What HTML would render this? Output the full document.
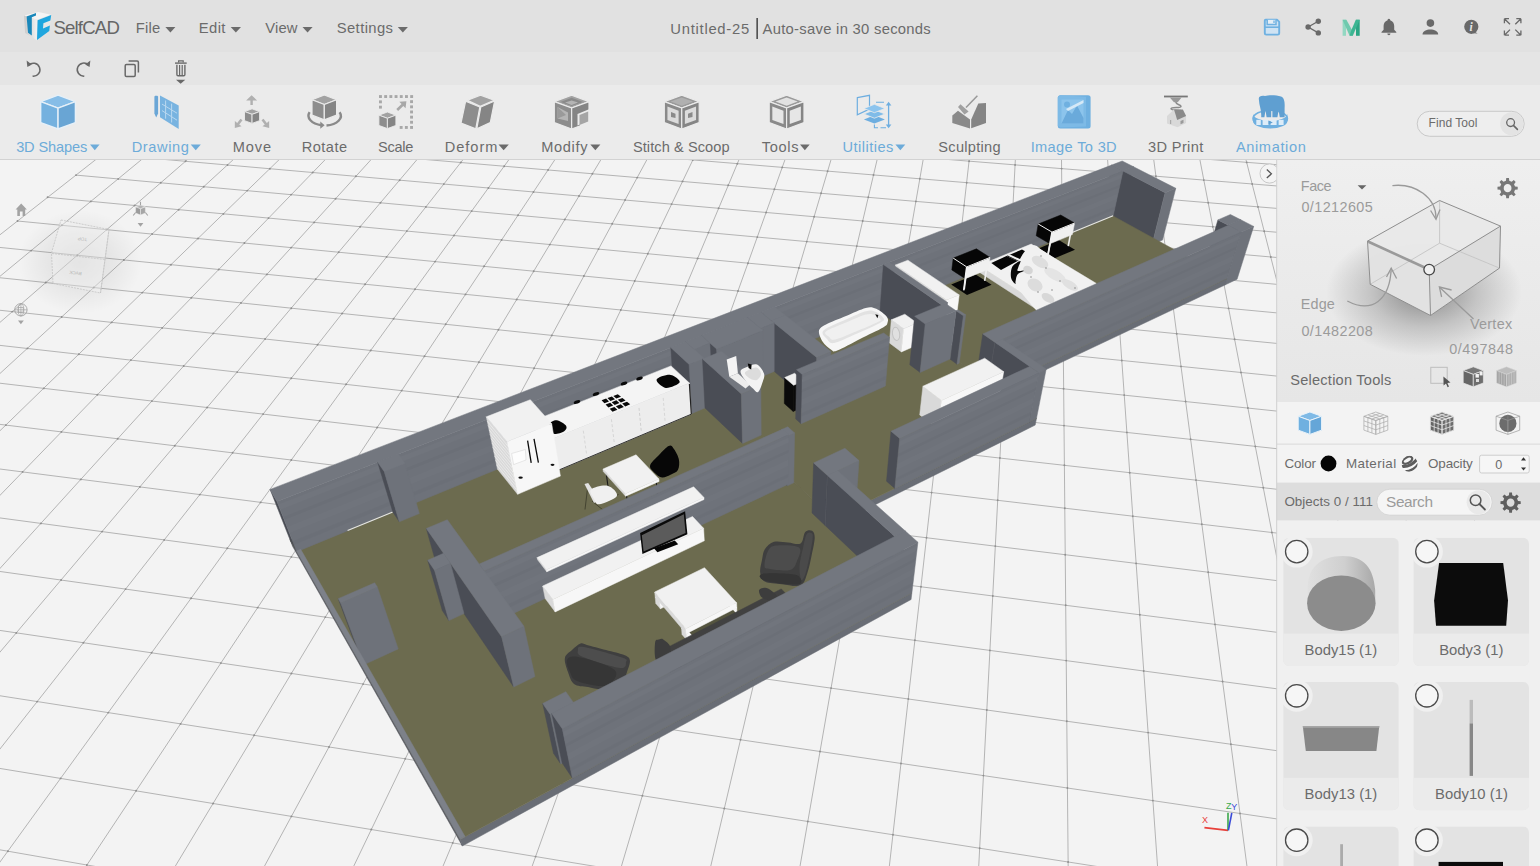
<!DOCTYPE html><html><head><meta charset="utf-8"><title>SelfCAD</title><style>html,body{margin:0;padding:0;background:#f1f1f1}
#app{position:relative;width:1540px;height:866px;overflow:hidden;font-family:"Liberation Sans",sans-serif;background:#f1f1f1}
#app>div{position:absolute;left:0;width:1540px}
#topbar{top:0;height:52px;background:#e1e1e1}
#row2{top:52px;height:33px;background:#e5e5e5}
#toolbar{top:85px;height:75px;background:#ebebeb}
#viewport{top:160px;height:706px;background:#f3f3f3}
#panel{top:160px;height:706px;pointer-events:none}
svg{position:absolute;left:0;top:0;display:block;font-family:"Liberation Sans",sans-serif}
svg text{white-space:pre}</style></head><body><div id="app"><div id="viewport"><svg width="1540" height="706" viewBox="0 160 1540 706"><path d="M366.8,-53.2L-4310.5,3618.9M397.4,-51.4L-4199.8,3739.3M428.3,-49.5L-4082.6,3866.9M459.3,-47.6L-3958.2,4002.2M490.6,-45.7L-3826.0,4146.0M522.2,-43.7L-3685.2,4299.2M553.9,-41.8L-3535.0,4462.6M585.9,-39.9L-3374.4,4637.4M618.2,-37.9L-3202.2,4824.7M650.6,-35.9L-3017.2,5026.0M683.3,-33.9L-2817.8,5242.9M716.3,-31.9L-2602.4,5477.2M749.5,-29.9L-2368.9,5731.2M783.0,-27.8L-2115.0,6007.5M816.7,-25.7L-1837.7,6309.1M850.6,-23.7L-1533.9,6639.7M884.8,-21.6L-1199.4,7003.6M919.3,-19.5L-829.3,7406.2M954.0,-17.3L-417.8,7853.9M989.0,-15.2L42.7,8354.9M1024.3,-13.0L561.4,8919.2M1059.9,-10.9L1150.1,9559.6M1095.7,-8.7L1823.9,10292.6M1131.8,-6.5L2602.8,11140.0M1168.2,-4.3L3513.4,12130.7M1204.8,-2.0L4592.3,13304.5M1241.8,0.2L5890.8,14717.1M1279.1,2.5L7483.6,16450.0M1316.6,4.8L9483.5,18625.7M1354.5,7.1L12069.5,21439.0M1392.6,9.5L15543.3,25218.2M1431.1,11.8L20457.2,30564.1M1469.8,14.2L27940.4,38705.2M1508.9,16.6L40721.6,52610.0M1548.3,19.0L67510.3,81753.9M1588.1,21.4L159248.4,181557.2M1628.1,23.9L-796913.4,-858665.6M1668.5,26.3L-125689.6,-128431.2M1709.2,28.8L-71657.7,-69649.1M1750.3,31.3L-51660.7,-47894.1M1791.7,33.9L-41242.9,-36560.4M366.8,-53.2L1791.7,33.9M352.9,-42.3L1809.1,48.7M338.4,-31.0L1827.4,64.3M323.3,-19.1L1846.6,80.6M307.6,-6.8L1866.8,97.8M291.2,6.1L1888.1,115.8M274.0,19.6L1910.4,134.9M256.0,33.7L1934.1,154.9M237.3,48.4L1959.0,176.2M217.5,63.9L1985.4,198.6M196.9,80.1L2013.4,222.4M175.1,97.2L2043.2,247.7M152.3,115.1L2074.8,274.6M128.2,134.1L2108.6,303.3M102.8,154.0L2144.6,334.0M76.0,175.1L2183.2,366.8M47.6,197.3L2224.6,402.0M17.5,221.0L2269.2,439.9M-14.4,246.0L2317.3,480.9M-48.4,272.7L2369.4,525.2M-84.6,301.1L2426.0,573.3M-123.2,331.5L2487.6,625.7M-164.6,363.9L2555.1,683.1M-209.0,398.8L2629.2,746.1M-256.7,436.2L2711.1,815.7M-308.2,476.7L2801.9,892.9M-363.9,520.4L2903.2,979.0M-424.3,567.8L3017.0,1075.8M-490.1,619.5L3145.7,1185.3M-562.0,676.0L3292.5,1310.1M-641.0,738.0L3461.5,1453.8M-728.1,806.3L3658.0,1620.9M-824.6,882.1L3889.6,1817.8M-932.2,966.6L4166.3,2053.1M-1052.8,1061.3L4502.8,2339.3M-1189.0,1168.2L4921.0,2694.9M-1344.1,1290.0L5454.6,3148.6M-1522.2,1429.8L6159.1,3747.7M-1728.8,1592.0L7132.1,4575.1M-1971.5,1782.6L8563.5,5792.2M-2260.6,2009.5L10876.7,7759.3M-2610.7,2284.4L15249.6,11477.7M-3043.5,2624.2L26640.6,21164.1M-3592.2,3054.9L130577.0,109545.8M-4310.5,3618.9L-41242.9,-36560.4" fill="none" stroke="#b4b4b4" stroke-width="1"/><path d="M76.0,175.1h0M47.6,197.3h0M17.5,221.0h0M144.0,157.6h0M118.2,178.9h0M90.8,201.4h0M61.9,225.3h0M31.2,250.6h0M-1.5,277.6h0M185.5,161.3h0M160.8,182.8h0M134.6,205.5h0M106.8,229.6h0M77.3,255.3h0M45.8,282.5h0M12.3,311.6h0M227.5,165.0h0M203.8,186.7h0M178.7,209.7h0M152.1,234.0h0M123.9,260.0h0M93.8,287.5h0M61.7,317.0h0M27.4,348.4h0M269.9,168.7h0M247.3,190.6h0M223.4,213.9h0M198.0,238.5h0M171.0,264.7h0M142.3,292.6h0M111.6,322.4h0M78.8,354.2h0M43.7,388.4h0M5.9,425.1h0M312.7,172.5h0M291.2,194.6h0M268.5,218.1h0M244.4,243.0h0M218.7,269.5h0M191.4,297.7h0M162.2,327.9h0M130.9,360.1h0M97.4,394.7h0M61.4,431.9h0M22.6,471.9h0M375.1,155.2h0M355.9,176.3h0M335.6,198.7h0M314.1,222.4h0M291.2,247.6h0M266.9,274.4h0M241.0,302.9h0M213.3,333.4h0M183.7,366.0h0M151.9,401.1h0M117.7,438.7h0M80.8,479.4h0M40.9,523.4h0M-2.4,571.1h0M417.7,158.8h0M399.7,180.2h0M380.5,202.8h0M360.2,226.7h0M338.7,252.2h0M315.7,279.3h0M291.3,308.2h0M265.1,339.0h0M237.2,372.1h0M207.1,407.5h0M174.8,445.7h0M139.9,486.9h0M102.1,531.6h0M61.1,580.0h0M16.3,632.9h0M460.8,162.5h0M443.8,184.1h0M425.9,206.9h0M406.8,231.1h0M386.6,256.9h0M365.1,284.2h0M342.1,313.5h0M317.6,344.7h0M291.3,378.2h0M263.1,414.1h0M232.6,452.8h0M199.8,494.6h0M164.2,539.9h0M125.6,589.1h0M83.4,642.8h0M37.2,701.6h0M504.2,166.2h0M488.4,188.0h0M471.7,211.1h0M454.0,235.5h0M435.1,261.6h0M415.0,289.3h0M393.6,318.8h0M370.7,350.5h0M346.1,384.3h0M319.7,420.8h0M291.3,460.0h0M260.6,502.4h0M227.3,548.3h0M191.1,598.3h0M151.6,652.8h0M108.3,712.6h0M60.6,778.4h0M7.9,851.2h0M548.1,169.9h0M533.5,192.0h0M518.0,215.3h0M501.6,240.0h0M484.1,266.3h0M465.5,294.4h0M445.7,324.3h0M424.5,356.3h0M401.7,390.6h0M377.2,427.5h0M350.8,467.3h0M322.3,510.3h0M291.4,556.9h0M257.7,607.6h0M220.9,663.1h0M180.6,723.9h0M136.1,790.8h0M86.9,865.0h0M592.4,173.7h0M579.0,196.0h0M564.8,219.5h0M549.8,244.6h0M533.7,271.2h0M516.7,299.5h0M498.4,329.8h0M478.9,362.2h0M458.0,397.0h0M435.5,434.3h0M411.2,474.7h0M384.9,518.3h0M356.4,565.6h0M325.3,617.1h0M291.4,673.5h0M254.1,735.3h0M213.1,803.5h0M648.7,156.3h0M637.2,177.6h0M625.1,200.0h0M612.2,223.8h0M598.5,249.1h0M583.9,276.0h0M568.4,304.7h0M551.8,335.4h0M534.1,368.2h0M515.0,403.4h0M494.5,441.3h0M472.4,482.1h0M448.4,526.4h0M422.4,574.4h0M394.1,626.8h0M363.1,684.1h0M329.0,747.0h0M291.4,816.4h0M692.8,160.0h0M682.5,181.4h0M671.6,204.1h0M660.0,228.2h0M647.8,253.8h0M634.7,281.0h0M620.8,310.0h0M605.9,341.0h0M589.9,374.2h0M572.8,409.9h0M554.4,448.3h0M534.4,489.7h0M512.9,534.6h0M489.5,583.4h0M463.9,636.6h0M436.0,694.8h0M405.2,758.8h0M371.3,829.5h0M737.3,163.7h0M728.2,185.3h0M718.6,208.3h0M708.4,232.6h0M697.6,258.5h0M686.0,286.0h0M673.7,315.3h0M660.6,346.7h0M646.5,380.4h0M631.4,416.5h0M615.0,455.4h0M597.4,497.5h0M578.3,543.0h0M557.6,592.5h0M534.9,646.6h0M510.1,705.8h0M482.9,770.9h0M452.7,842.9h0M782.2,167.4h0M774.4,189.3h0M766.1,212.5h0M757.3,237.1h0M748.0,263.2h0M738.0,291.0h0M727.4,320.7h0M716.0,352.5h0M703.8,386.6h0M690.7,423.2h0M676.6,462.6h0M661.3,505.3h0M644.8,551.5h0M626.8,601.8h0M607.1,656.7h0M585.6,716.9h0M561.9,783.2h0M535.6,856.6h0M827.6,171.2h0M821.1,193.3h0M814.1,216.7h0M806.8,241.6h0M798.9,268.0h0M790.6,296.1h0M781.6,326.2h0M772.1,358.4h0M761.9,392.9h0M750.9,430.0h0M739.0,470.0h0M726.2,513.2h0M712.2,560.1h0M697.1,611.2h0M680.5,667.0h0M662.4,728.2h0M642.4,795.7h0M873.5,175.0h0M868.3,197.3h0M862.7,221.0h0M856.8,246.1h0M850.5,272.8h0M843.8,301.3h0M836.6,331.7h0M828.9,364.3h0M820.7,399.2h0M811.8,436.8h0M802.3,477.4h0M792.0,521.3h0M780.8,568.9h0M768.5,620.8h0M755.2,677.5h0M740.5,739.8h0M724.3,808.5h0M923.6,157.5h0M919.8,178.8h0M915.9,201.4h0M911.7,225.3h0M907.3,250.7h0M902.6,277.7h0M897.6,306.5h0M892.2,337.3h0M886.5,370.3h0M880.3,405.7h0M873.7,443.8h0M866.5,484.9h0M858.7,529.4h0M850.3,577.8h0M841.1,630.5h0M831.1,688.1h0M820.0,751.5h0M807.8,821.5h0M969.1,161.2h0M966.7,182.7h0M964.1,205.5h0M961.4,229.7h0M958.5,255.4h0M955.4,282.7h0M952.1,311.8h0M948.5,343.0h0M944.8,376.4h0M940.7,412.3h0M936.3,450.9h0M931.6,492.6h0M926.5,537.7h0M921.0,586.8h0M914.9,640.3h0M908.3,699.0h0M901.0,763.5h0M893.0,834.7h0M1015.1,164.9h0M1014.0,186.6h0M1012.8,209.7h0M1011.5,234.1h0M1010.2,260.1h0M1008.7,287.7h0M1007.2,317.2h0M1005.6,348.8h0M1003.8,382.6h0M1001.9,418.9h0M999.9,458.0h0M997.7,500.3h0M995.3,546.1h0M992.8,596.0h0M989.9,650.4h0M986.8,710.0h0M983.4,775.6h0M979.7,848.2h0M1061.6,168.6h0M1061.8,190.6h0M1062.0,213.9h0M1062.2,238.6h0M1062.5,264.8h0M1062.7,292.8h0M1063.0,322.6h0M1063.3,354.6h0M1063.6,388.8h0M1064.0,425.6h0M1064.4,465.3h0M1064.8,508.2h0M1065.2,554.7h0M1065.7,605.3h0M1066.2,660.6h0M1066.8,721.2h0M1067.4,788.0h0M1068.1,862.0h0M1108.5,172.4h0M1110.1,194.6h0M1111.7,218.1h0M1113.5,243.1h0M1115.4,269.6h0M1117.4,297.9h0M1119.5,328.1h0M1121.8,360.5h0M1124.2,395.1h0M1126.9,432.4h0M1129.7,472.7h0M1132.8,516.2h0M1136.1,563.4h0M1139.8,614.8h0M1143.7,671.0h0M1148.1,732.6h0M1152.9,800.6h0M1153.1,155.1h0M1155.9,176.2h0M1158.9,198.7h0M1162.0,222.4h0M1165.3,247.7h0M1168.9,274.5h0M1172.6,303.1h0M1176.7,333.7h0M1181.0,366.4h0M1185.6,401.5h0M1190.6,439.3h0M1196.0,480.1h0M1201.8,524.3h0M1208.2,572.2h0M1215.0,624.4h0M1222.6,681.5h0M1230.9,744.3h0M1240.0,813.5h0M1199.7,158.7h0M1203.8,180.1h0M1208.2,202.7h0M1212.8,226.8h0M1217.8,252.3h0M1223.0,279.4h0M1228.6,308.4h0M1234.6,339.3h0M1241.0,372.5h0M1247.9,408.0h0M1255.3,446.4h0M1263.3,487.7h0M1271.9,532.5h0M1281.3,581.1h0M1291.6,634.2h0M1302.8,692.3h0M1315.1,756.1h0M1328.8,826.6h0M1246.7,162.4h0M1252.2,184.0h0M1258.0,206.9h0M1264.2,231.2h0M1270.8,257.0h0M1277.8,284.4h0M1285.2,313.7h0M1293.2,345.0h0M1301.7,378.6h0M1310.9,414.6h0M1320.8,453.5h0M1331.5,495.4h0M1343.0,540.8h0M1355.6,590.2h0M1369.3,644.1h0M1384.4,703.2h0M1400.9,768.1h0M1419.2,840.0h0M1294.2,166.1h0M1301.1,187.9h0M1308.4,211.1h0M1316.2,235.6h0M1324.4,261.7h0M1333.2,289.5h0M1342.5,319.1h0M1352.5,350.8h0M1363.3,384.8h0M1374.8,421.3h0M1387.3,460.7h0M1400.7,503.2h0M1415.3,549.3h0M1431.1,599.5h0M1448.4,654.2h0M1467.4,714.3h0M1488.3,780.4h0M1511.4,853.6h0M1342.2,169.9h0M1350.5,191.9h0M1359.3,215.3h0M1368.7,240.1h0M1378.6,266.5h0M1389.2,294.6h0M1400.5,324.5h0M1412.6,356.6h0M1425.6,391.1h0M1439.6,428.1h0M1454.6,468.0h0M1470.9,511.1h0M1488.6,557.9h0M1507.8,608.9h0M1528.8,664.5h0M1390.7,173.7h0M1400.4,195.9h0M1410.8,219.6h0M1421.8,244.6h0M1433.5,271.3h0M1445.9,299.7h0M1459.3,330.1h0M1473.5,362.6h0M1488.8,397.4h0M1505.2,434.9h0M1523.0,475.4h0M1542.2,519.1h0M1429.0,156.2h0M1439.6,177.5h0M1450.9,200.0h0M1462.8,223.9h0M1475.5,249.2h0M1489.0,276.2h0M1503.3,304.9h0M1518.7,335.7h0M1535.2,368.6h0M1477.1,159.9h0M1489.1,181.4h0M1501.9,204.1h0M1515.4,228.2h0M1529.8,253.9h0M1525.6,163.6h0M1539.1,185.3h0" fill="none" stroke="#8f8f8f" stroke-width="1.9" stroke-linecap="round"/><!-- Ne -->
<polygon points="1111.6,165.1 1123,171 1111.7,222.1 1100.8,216.1" fill="#4a4d55" stroke="#4a4d55" stroke-width="0.5" />
<polygon points="1123,171 1133.6,166.8 1122,217.9 1111.7,222.1" fill="#6e727a" stroke="#6e727a" stroke-width="0.5" />
<polygon points="1111.6,165.1 1122.2,161 1133.6,166.8 1123,171" fill="#73777f" stroke="#73777f" stroke-width="0.5" />
<!-- E1 -->
<polygon points="1123,171 1165.1,192.7 1152.1,244.6 1111.7,222.1" fill="#4a4d55" stroke="#4a4d55" stroke-width="0.5" />
<polygon points="1165.1,192.7 1175.8,188.3 1162.5,240.1 1152.1,244.6" fill="#6e727a" stroke="#6e727a" stroke-width="0.5" />
<polygon points="1123,171 1133.6,166.8 1175.8,188.3 1165.1,192.7" fill="#73777f" stroke="#73777f" stroke-width="0.5" />
<!-- S3stub -->
<polygon points="1217.9,219.9 1228.4,225.3 1212.6,278.2 1202.6,272.6" fill="#4a4d55" stroke="#4a4d55" stroke-width="0.5" />
<polygon points="1228.4,225.3 1240.8,219.8 1224.8,272.5 1212.6,278.2" fill="#6e727a" stroke="#6e727a" stroke-width="0.5" />
<polygon points="1217.9,219.9 1230.4,214.5 1240.8,219.8 1228.4,225.3" fill="#73777f" stroke="#73777f" stroke-width="0.5" />
<!-- S3e -->
<polygon points="1228.4,225.3 1241.2,232 1224.9,285 1212.6,278.2" fill="#4a4d55" stroke="#4a4d55" stroke-width="0.5" />
<polygon points="1241.2,232 1253.7,226.4 1237.1,279.2 1224.9,285" fill="#6e727a" stroke="#6e727a" stroke-width="0.5" />
<polygon points="1228.4,225.3 1240.8,219.8 1253.7,226.4 1241.2,232" fill="#73777f" stroke="#73777f" stroke-width="0.5" />
<!-- F3 -->
<polygon points="876,301.7 994.5,387.8 993.4,394.5 875.6,308.2" fill="#565960" stroke="#565960" stroke-width="0.5" />
<polygon points="994.5,387.8 1226.9,278.6 1224.9,285 993.4,394.5" fill="#696d75" stroke="#696d75" stroke-width="0.5" />
<polygon points="876,301.7 1102.1,209.9 1226.9,278.6 994.5,387.8" fill="#6c6b4f" stroke="#6c6b4f" stroke-width="0.5" />
<!-- F2 -->
<polygon points="684.3,379.5 833.1,518.9 832.8,525.8 684.7,386.2" fill="#565960" stroke="#565960" stroke-width="0.5" />
<polygon points="833.1,518.9 1036.5,418.3 1035.2,425.1 832.8,525.8" fill="#696d75" stroke="#696d75" stroke-width="0.5" />
<polygon points="684.3,379.5 876,301.7 1036.5,418.3 833.1,518.9" fill="#6c6b4f" stroke="#6c6b4f" stroke-width="0.5" />
<!-- F1 -->
<polygon points="290,539.7 460.1,839.5 462.4,846 292.7,546.5" fill="#565960" stroke="#565960" stroke-width="0.5" />
<polygon points="460.1,839.5 911.9,592.7 911.1,599.5 462.4,846" fill="#696d75" stroke="#696d75" stroke-width="0.5" />
<polygon points="290,539.7 684.3,379.5 911.9,592.7 460.1,839.5" fill="#6c6b4f" stroke="#6c6b4f" stroke-width="0.5" />
<!-- N -->
<polygon points="270.1,489.4 277,501.4 296.8,551.7 290,539.7" fill="#4a4d55" stroke="#4a4d55" stroke-width="0.5" />
<polygon points="277,501.4 1123,171 1113.1,215.9 296.8,551.7" fill="#6e727a" stroke="#6e727a" stroke-width="0.5" />
<polygon points="278.2,504.6 1122.4,173.7 1121.4,178.3 280.3,509.7" fill="#ffffff" fill-opacity="0.022"/>
<polygon points="283.1,516.9 1120,184.7 1119.4,187.4 284.3,520" fill="#000000" fill-opacity="0.022"/>
<polygon points="287.1,527.1 1118,193.8 1116.8,199.1 289.5,533.1" fill="#ffffff" fill-opacity="0.02"/>
<polygon points="292.6,541 1115.2,206.3 1114.4,209.8 294.2,544.9" fill="#000000" fill-opacity="0.02"/>
<polygon points="270.1,489.4 1111.6,165.1 1123,171 277,501.4" fill="#73777f" stroke="#73777f" stroke-width="0.5" />
<path d="M347.6,530.6L392.8,512.0" stroke="#e8e8e0" stroke-width="1.1"/><path d="M1056.2,239.1L1113.1,215.7" stroke="#e8e8e0" stroke-width="1.1"/>
<!-- ns2 -->
<polygon points="1035.0,249.9 1058.7,240.1 1075.0,249.7 1051.2,259.7" fill="#060606" /><path d="M1048.1,254.4L1050.3,242.5" stroke="#efefef" stroke-width="1.6"/><path d="M1068.2,246.1L1070.5,234.1" stroke="#efefef" stroke-width="1.6"/>
<polygon points="1038.2,224 1052,232.1 1049.9,243.8 1036.2,235.7" fill="#060606" stroke="#060606" stroke-width="0.5" />
<polygon points="1052,232.1 1074.6,223 1072.3,234.6 1049.9,243.8" fill="#f0f0f0" stroke="#f0f0f0" stroke-width="0.5" />
<polygon points="1038.2,224 1060.7,215 1074.6,223 1052,232.1" fill="#060606" stroke="#060606" stroke-width="0.5" />
<path d="M1038.2,224.0L1052.0,232.1L1074.6,223.0" fill="none" stroke="#f2f2f2" stroke-width="1"/><path d="M1052.0,232.1L1047.8,255.3" stroke="#f2f2f2" stroke-width="1.5"/>
<!-- bed -->
<polygon points="979,265.4 1043.1,306.7 1042,312.8 978.2,271.4" fill="#d9d9d9" stroke="#d9d9d9" stroke-width="0.5" />
<polygon points="1043.1,306.7 1096.1,283.3 1094.8,289.3 1042,312.8" fill="#f7f7f7" stroke="#f7f7f7" stroke-width="0.5" />
<polygon points="979,265.4 1031.2,244.1 1096.1,283.3 1043.1,306.7" fill="#f1f1f1" stroke="#f1f1f1" stroke-width="0.5" />
<polygon points="991.3,263.0 1006.5,256.1 1017.6,261.0 1001.0,270.0" fill="#060606" /><polygon points="1006.5,256.1 1022.0,249.5 1030.0,254.0 1017.6,261.0" fill="#060606" /><polygon points="1007.5,255.6 1010.0,254.6 1021.0,259.6 1018.3,260.7" fill="#f2f2f2" /><path d="M1019.7,259.6 C1021.4,256.3 1023.6,252.4 1026.0,250.0 C1028.4,247.6 1031.2,245.0 1034.2,245.2 C1037.2,245.4 1038.3,247.7 1043.9,251.3 C1049.5,254.9 1059.7,261.7 1068.0,267.0 C1076.3,272.3 1089.5,279.6 1093.8,283.1 C1098.1,286.6 1098.6,285.1 1094.0,288.0 C1089.4,290.9 1075.0,296.5 1066.0,300.5 C1057.0,304.5 1044.9,310.7 1039.8,312.2 C1034.7,313.7 1038.2,312.1 1035.6,309.4 C1033.0,306.7 1027.5,300.4 1024.0,296.0 C1020.5,291.6 1016.1,287.4 1014.8,283.1 C1013.5,278.8 1015.2,273.9 1016.0,270.0 C1016.8,266.1 1018.0,262.9 1019.7,259.6Z" fill="#f1f1f1" /><path d="M1012.4,266.5 C1014.0,263.7 1019.4,260.9 1020.4,261.0 C1021.4,261.1 1018.8,265.3 1018.4,267.0 C1018.0,268.7 1016.5,270.5 1018.0,271.0 C1019.5,271.5 1027.3,269.3 1027.3,269.8 C1027.3,270.3 1020.0,272.1 1018.0,274.0 C1016.0,275.9 1016.1,279.3 1015.6,281.0 C1015.1,282.7 1016.0,284.6 1015.2,284.0 C1014.4,283.4 1011.5,280.5 1011.0,277.6 C1010.5,274.7 1010.8,269.3 1012.4,266.5Z" fill="#080808" /><ellipse cx="1040.0" cy="262.0" rx="9.0" ry="5.0" fill="#dedede" transform="rotate(30 1040.0 262.0)"/><ellipse cx="1055.0" cy="275.0" rx="12.0" ry="5.0" fill="#e4e4e4" transform="rotate(30 1055.0 275.0)"/><ellipse cx="1035.0" cy="285.0" rx="8.0" ry="6.0" fill="#dcdcdc" transform="rotate(30 1035.0 285.0)"/><ellipse cx="1070.0" cy="285.0" rx="9.0" ry="4.0" fill="#e0e0e0" transform="rotate(30 1070.0 285.0)"/><ellipse cx="1048.0" cy="298.0" rx="7.0" ry="4.0" fill="#d8d8d8" transform="rotate(30 1048.0 298.0)"/><ellipse cx="1028.0" cy="270.0" rx="5.0" ry="4.0" fill="#d5d5d5" transform="rotate(30 1028.0 270.0)"/><circle cx="1046.0" cy="268.0" r="0.7" fill="#777"/><circle cx="1060.0" cy="281.0" r="0.7" fill="#777"/><circle cx="1038.0" cy="292.0" r="0.7" fill="#777"/><circle cx="1031.0" cy="277.0" r="0.7" fill="#777"/><circle cx="1052.0" cy="290.0" r="0.7" fill="#777"/><circle cx="1075.0" cy="288.0" r="0.7" fill="#777"/><circle cx="1041.0" cy="256.0" r="0.7" fill="#777"/>
<!-- ns1 -->
<polygon points="951.2,284.5 975.7,274.4 991.6,284.8 967.0,295.1" fill="#060606" /><path d="M964.2,289.5L965.8,277.3" stroke="#efefef" stroke-width="1.6"/><path d="M984.7,280.9L986.5,268.8" stroke="#efefef" stroke-width="1.6"/>
<polygon points="953.2,258.1 966.7,266.9 965.2,278.7 951.8,269.9" fill="#060606" stroke="#060606" stroke-width="0.5" />
<polygon points="966.7,266.9 990,257.4 988.3,269.2 965.2,278.7" fill="#f0f0f0" stroke="#f0f0f0" stroke-width="0.5" />
<polygon points="953.2,258.1 976.4,248.8 990,257.4 966.7,266.9" fill="#060606" stroke="#060606" stroke-width="0.5" />
<path d="M953.2,258.1L966.7,266.9L990.0,257.4" fill="none" stroke="#f2f2f2" stroke-width="1"/><path d="M966.7,266.9L963.7,290.4" stroke="#f2f2f2" stroke-width="1.5"/>
<!-- wardrobe -->
<polygon points="895.5,265 946.6,300.1 940.7,349.7 891.4,313.9" fill="#d9d9d9" stroke="#d9d9d9" stroke-width="0.5" />
<polygon points="946.6,300.1 959.2,294.9 952.9,344.4 940.7,349.7" fill="#f7f7f7" stroke="#f7f7f7" stroke-width="0.5" />
<polygon points="895.5,265 907.9,260.2 959.2,294.9 946.6,300.1" fill="#f1f1f1" stroke="#f1f1f1" stroke-width="0.5" />
<!-- BE -->
<polygon points="883.4,264.6 941.7,304.9 936.1,353.1 879.9,311.9" fill="#4a4d55" stroke="#4a4d55" stroke-width="0.5" />
<polygon points="941.7,304.9 947.6,302.5 941.8,350.6 936.1,353.1" fill="#6e727a" stroke="#6e727a" stroke-width="0.5" />
<polygon points="883.4,264.6 889.2,262.3 947.6,302.5 941.7,304.9" fill="#73777f" stroke="#73777f" stroke-width="0.5" />
<!-- tub -->
<path d="M819.0,330.6 C819.6,327.8 821.5,326.8 826.0,324.4 C830.5,322.0 839.4,318.8 846.0,316.0 C852.6,313.2 860.8,309.1 865.8,307.9 C870.8,306.7 872.7,307.4 876.2,308.8 C879.7,310.2 884.7,314.3 886.6,316.6 C888.5,318.9 888.2,320.7 887.6,322.5 C887.0,324.3 887.7,324.8 883.1,327.5 C878.5,330.2 867.6,335.1 860.0,339.0 C852.4,342.9 842.0,348.8 837.2,350.6 C832.4,352.4 833.7,351.2 831.2,349.7 C828.8,348.2 824.5,344.7 822.5,341.5 C820.5,338.3 818.4,333.5 819.0,330.6Z" fill="#f6f6f6" /><path d="M823.5,330.5 C826.7,327.2 838.9,322.7 846.0,319.5 C853.1,316.3 861.0,312.4 866.0,311.2 C871.0,309.9 873.1,310.8 876.0,312.0 C878.9,313.2 882.9,316.8 883.6,318.6 C884.3,320.4 884.6,320.4 880.0,323.0 C875.4,325.6 863.7,330.7 856.0,334.0 C848.3,337.3 838.8,342.2 834.0,343.0 C829.2,343.8 828.8,341.1 827.0,339.0 C825.2,336.9 820.3,333.8 823.5,330.5Z" fill="#e2e2e2" /><path d="M826.0,331.5 C828.8,329.1 839.3,325.3 846.0,322.5 C852.7,319.7 861.2,315.7 866.0,314.5 C870.8,313.3 872.6,314.3 875.0,315.2 C877.4,316.1 880.3,318.4 880.6,319.6 C880.9,320.8 881.1,320.6 877.0,322.6 C872.9,324.6 863.0,328.7 856.0,331.5 C849.0,334.3 839.5,338.7 835.0,339.6 C830.5,340.5 830.5,338.2 829.0,336.8 C827.5,335.4 823.2,333.9 826.0,331.5Z" fill="#f0f0f0" /><polygon points="875.2,314.3 878.4,315.0 877.4,318.2" fill="#111" />
<!-- washer -->
<polygon points="891.3,319.8 903.6,328.8 901.4,351.9 889.4,342.9" fill="#d9d9d9" stroke="#d9d9d9" stroke-width="0.5" />
<polygon points="903.6,328.8 917.1,323 914.8,346.1 901.4,351.9" fill="#f7f7f7" stroke="#f7f7f7" stroke-width="0.5" />
<polygon points="891.3,319.8 904.8,314.2 917.1,323 903.6,328.8" fill="#f1f1f1" stroke="#f1f1f1" stroke-width="0.5" />
<ellipse cx="896.1" cy="333.9" rx="3.6" ry="6.6" fill="#e0e0e0" stroke="#c4c4c4" stroke-width="1" transform="rotate(-8 896.1 333.9)"/>
<!-- door -->
<polygon points="956.1,310.8 963.4,315.8 957,364.2 950,359.1" fill="#4a4d55" stroke="#4a4d55" stroke-width="0.5" />
<polygon points="963.4,315.8 965.7,314.8 959.2,363.2 957,364.2" fill="#6e727a" stroke="#6e727a" stroke-width="0.5" />
<polygon points="956.1,310.8 958.4,309.9 965.7,314.8 963.4,315.8" fill="#73777f" stroke="#73777f" stroke-width="0.5" />
<!-- BS -->
<polygon points="914.6,316.3 925.2,324 920.1,372.4 909.8,364.7" fill="#4a4d55" stroke="#4a4d55" stroke-width="0.5" />
<polygon points="925.2,324 956.1,310.8 950,359.1 920.1,372.4" fill="#6e727a" stroke="#6e727a" stroke-width="0.5" />
<polygon points="914.6,316.3 945.4,303.4 956.1,310.8 925.2,324" fill="#73777f" stroke="#73777f" stroke-width="0.5" />
<!-- S3 -->
<polygon points="982.8,333.9 995.1,342.4 987.4,391.2 975.6,382.5" fill="#4a4d55" stroke="#4a4d55" stroke-width="0.5" />
<polygon points="995.1,342.4 1241.2,232 1226.9,278.6 987.4,391.2" fill="#6e727a" stroke="#6e727a" stroke-width="0.5" />
<polygon points="994.6,345.4 1240.3,234.9 1238.8,239.6 993.8,350.4" fill="#ffffff" fill-opacity="0.022"/>
<polygon points="992.7,357.4 1236.8,246.3 1235.9,249.1 992.2,360.3" fill="#000000" fill-opacity="0.022"/>
<polygon points="991.2,367.2 1233.9,255.6 1232.2,261.2 990.2,373" fill="#ffffff" fill-opacity="0.02"/>
<polygon points="989,380.7 1229.9,268.6 1228.8,272.2 988.4,384.5" fill="#000000" fill-opacity="0.02"/>
<polygon points="982.8,333.9 1228.4,225.3 1241.2,232 995.1,342.4" fill="#73777f" stroke="#73777f" stroke-width="0.5" />
<!-- Nthick2 -->
<polygon points="761.1,312.3 771.4,320.7 771.5,369.1 761.5,360.6" fill="#4a4d55" stroke="#4a4d55" stroke-width="0.5" />
<polygon points="771.4,320.7 785.3,315.2 784.9,363.5 771.5,369.1" fill="#6e727a" stroke="#6e727a" stroke-width="0.5" />
<polygon points="761.1,312.3 774.9,306.9 785.3,315.2 771.4,320.7" fill="#73777f" stroke="#73777f" stroke-width="0.5" />
<!-- J -->
<polygon points="995.1,342.4 1038.8,372.7 1029.3,421.9 987.4,391.2" fill="#4a4d55" stroke="#4a4d55" stroke-width="0.5" />
<polygon points="1038.8,372.7 1046.2,369.1 1036.5,418.3 1029.3,421.9" fill="#6e727a" stroke="#6e727a" stroke-width="0.5" />
<polygon points="995.1,342.4 1002.4,339.1 1046.2,369.1 1038.8,372.7" fill="#73777f" stroke="#73777f" stroke-width="0.5" />
<!-- BW -->
<polygon points="771.4,320.7 816.7,357.5 815.1,406.5 771.5,369.1" fill="#4a4d55" stroke="#4a4d55" stroke-width="0.5" />
<polygon points="816.7,357.5 830.9,351.5 828.8,400.4 815.1,406.5" fill="#6e727a" stroke="#6e727a" stroke-width="0.5" />
<polygon points="771.4,320.7 785.3,315.2 830.9,351.5 816.7,357.5" fill="#73777f" stroke="#73777f" stroke-width="0.5" />
<!-- Npier2 -->
<polygon points="747.6,317.6 760.6,328.4 761,376.9 748.4,366" fill="#4a4d55" stroke="#4a4d55" stroke-width="0.5" />
<polygon points="760.6,328.4 774.2,323 774.2,371.4 761,376.9" fill="#6e727a" stroke="#6e727a" stroke-width="0.5" />
<polygon points="747.6,317.6 761.1,312.3 774.2,323 760.6,328.4" fill="#73777f" stroke="#73777f" stroke-width="0.5" />
<!-- Nthick1 -->
<polygon points="701.5,335.6 716.6,348.9 718.6,397.8 703.9,384.3" fill="#4a4d55" stroke="#4a4d55" stroke-width="0.5" />
<polygon points="716.6,348.9 763.1,330.4 763.4,379 718.6,397.8" fill="#6e727a" stroke="#6e727a" stroke-width="0.5" />
<polygon points="701.5,335.6 747.6,317.6 763.1,330.4 716.6,348.9" fill="#73777f" stroke="#73777f" stroke-width="0.5" />
<!-- W2b -->
<polygon points="685.7,341.8 694,349.2 696.7,398.1 688.7,390.5" fill="#4a4d55" stroke="#4a4d55" stroke-width="0.5" />
<polygon points="694,349.2 709.8,343 712,391.7 696.7,398.1" fill="#6e727a" stroke="#6e727a" stroke-width="0.5" />
<polygon points="685.7,341.8 701.5,335.6 709.8,343 694,349.2" fill="#73777f" stroke="#73777f" stroke-width="0.5" />
<!-- cab -->
<polygon points="784.6,377.6 793.6,385.3 793.2,411.4 784.3,403.6" fill="#0a0a0a" stroke="#0a0a0a" stroke-width="0.5" />
<polygon points="793.6,385.3 803.7,381 803.2,407.1 793.2,411.4" fill="#0a0a0a" stroke="#0a0a0a" stroke-width="0.5" />
<polygon points="784.6,377.6 794.6,373.3 803.7,381 793.6,385.3" fill="#f0f0f0" stroke="#f0f0f0" stroke-width="0.5" />
<!-- FW -->
<polygon points="796.5,369.7 802.2,374.4 801.1,423.7 795.7,418.9" fill="#4a4d55" stroke="#4a4d55" stroke-width="0.5" />
<polygon points="802.2,374.4 889.5,337.3 885.4,386 801.1,423.7" fill="#6e727a" stroke="#6e727a" stroke-width="0.5" />
<polygon points="802.1,377.5 889.2,340.4 888.8,345.4 802,382.5" fill="#ffffff" fill-opacity="0.022"/>
<polygon points="801.9,389.6 888.2,352.3 888,355.3 801.8,392.6" fill="#000000" fill-opacity="0.022"/>
<polygon points="801.7,399.5 887.4,362.1 886.9,367.9 801.5,405.4" fill="#ffffff" fill-opacity="0.02"/>
<polygon points="801.4,413.1 886.3,375.6 886,379.4 801.3,417" fill="#000000" fill-opacity="0.02"/>
<polygon points="796.5,369.7 883.6,333 889.5,337.3 802.2,374.4" fill="#73777f" stroke="#73777f" stroke-width="0.5" />
<!-- chest -->
<polygon points="922.9,386.2 941.5,400.5 937.9,429.3 919.7,414.9" fill="#d9d9d9" stroke="#d9d9d9" stroke-width="0.5" />
<polygon points="941.5,400.5 1003.7,371.7 998.9,400.2 937.9,429.3" fill="#f7f7f7" stroke="#f7f7f7" stroke-width="0.5" />
<polygon points="922.9,386.2 984.7,358.2 1003.7,371.7 941.5,400.5" fill="#f1f1f1" stroke="#f1f1f1" stroke-width="0.5" />
<!-- W2 -->
<polygon points="670.8,347.6 689.1,364.4 692,413.4 674.3,396.4" fill="#4a4d55" stroke="#4a4d55" stroke-width="0.5" />
<polygon points="689.1,364.4 704.1,358.3 706.5,407.3 692,413.4" fill="#6e727a" stroke="#6e727a" stroke-width="0.5" />
<polygon points="670.8,347.6 685.7,341.8 704.1,358.3 689.1,364.4" fill="#73777f" stroke="#73777f" stroke-width="0.5" />
<!-- TW -->
<polygon points="702.5,359 741.3,393.9 742.5,443.4 705,408" fill="#4a4d55" stroke="#4a4d55" stroke-width="0.5" />
<polygon points="741.3,393.9 760.8,385.7 761.2,435.1 742.5,443.4" fill="#6e727a" stroke="#6e727a" stroke-width="0.5" />
<polygon points="702.5,359 721.6,351.3 760.8,385.7 741.3,393.9" fill="#73777f" stroke="#73777f" stroke-width="0.5" />
<polygon points="726.7,359.4 736.2,356.0 737.9,373.3 729.3,376.8" fill="#f4f4f4" /><polygon points="729.3,376.8 737.9,373.3 750.0,384.5 745.6,388.6" fill="#ededed" /><path d="M740.5,371.6 C740.7,369.0 745.2,367.8 748.0,366.6 C750.8,365.4 754.4,363.5 757.0,364.6 C759.6,365.7 762.9,370.6 763.9,373.3 C764.9,376.0 764.0,377.9 763.0,381.0 C762.0,384.1 759.9,390.8 758.2,392.0 C756.5,393.2 754.9,390.2 753.0,388.5 C751.1,386.8 748.7,384.8 746.6,382.0 C744.5,379.2 740.3,374.2 740.5,371.6Z" fill="#f3f3f3" /><path d="M745.0,372.6 C746.0,370.8 753.3,367.4 756.0,367.6 C758.7,367.8 760.8,371.5 761.0,373.6 C761.2,375.7 758.8,379.2 757.0,380.0 C755.2,380.8 752.0,379.8 750.0,378.6 C748.0,377.4 744.0,374.4 745.0,372.6Z" fill="#dcdcdc" /><polygon points="747.8,363.4 751.6,364.4 751.2,369.4 748.6,368.0" fill="#080808" />
<!-- S2 -->
<polygon points="891,431.3 899.7,438.4 894.9,488.4 886.5,481.2" fill="#4a4d55" stroke="#4a4d55" stroke-width="0.5" />
<polygon points="899.7,438.4 1038.8,372.7 1029.3,421.9 894.9,488.4" fill="#6e727a" stroke="#6e727a" stroke-width="0.5" />
<polygon points="899.4,441.5 1038.2,375.7 1037.2,380.8 898.9,446.7" fill="#ffffff" fill-opacity="0.022"/>
<polygon points="898.2,453.8 1035.9,387.8 1035.3,390.8 897.9,456.9" fill="#000000" fill-opacity="0.022"/>
<polygon points="897.2,463.9 1033.9,397.7 1032.8,403.6 896.7,469.9" fill="#ffffff" fill-opacity="0.02"/>
<polygon points="895.9,477.7 1031.3,411.4 1030.6,415.2 895.5,481.6" fill="#000000" fill-opacity="0.02"/>
<polygon points="891,431.3 1029.7,366.4 1038.8,372.7 899.7,438.4" fill="#73777f" stroke="#73777f" stroke-width="0.5" />
<!-- counter -->
<polygon points="534,420.4 550.8,439.6 556.1,471.2 539.6,451.9" fill="#d4d4d4" stroke="#d4d4d4" stroke-width="0.5" />
<polygon points="550.8,439.6 689.4,383 691.3,414.2 556.1,471.2" fill="#ededed" stroke="#ededed" stroke-width="0.5" />
<polygon points="534,420.4 671,365.9 689.4,383 550.8,439.6" fill="#f4f4f4" stroke="#f4f4f4" stroke-width="0.5" />
<path d="M549.4,423.9 C550.3,422.0 554.0,419.9 556.8,420.2 C559.6,420.5 564.9,423.9 566.1,425.8 C567.3,427.7 566.1,429.9 564.2,431.3 C562.4,432.7 557.1,434.1 555.0,434.1 C552.9,434.1 552.2,433.0 551.3,431.3 C550.4,429.6 548.5,425.8 549.4,423.9Z" fill="#060606" /><path d="M656.6,379.6 C657.4,377.4 666.6,374.4 670.5,374.9 C674.4,375.3 680.5,380.1 679.7,382.3 C678.9,384.5 669.6,388.3 665.8,387.9 C661.9,387.4 655.8,381.8 656.6,379.6Z" fill="#060606" /><polygon points="601.6,400.3 606.1,398.6 609.0,401.5 604.4,403.3" fill="#080808" /><polygon points="605.6,404.6 610.2,402.7 613.2,405.6 608.4,407.6" fill="#080808" /><polygon points="609.7,408.8 614.4,406.9 617.4,409.7 612.5,411.8" fill="#080808" /><polygon points="607.5,398.1 611.9,396.4 615.0,399.2 610.4,400.9" fill="#080808" /><polygon points="611.7,402.2 616.3,400.3 619.4,403.1 614.7,405.0" fill="#080808" /><polygon points="615.9,406.2 620.7,404.3 623.8,407.0 618.9,409.1" fill="#080808" /><polygon points="613.3,395.9 617.8,394.2 621.0,396.8 616.4,398.6" fill="#080808" /><polygon points="617.8,399.8 622.4,397.9 625.6,400.5 620.9,402.5" fill="#080808" /><polygon points="622.2,403.6 627.0,401.7 630.2,404.3 625.3,406.4" fill="#080808" /><ellipse cx="577.0" cy="402.0" rx="3.4" ry="1.7" fill="#0a0a0a" transform="rotate(-20 577.0 402.0)"/><ellipse cx="596.0" cy="394.0" rx="3.4" ry="1.7" fill="#0a0a0a" transform="rotate(-20 596.0 394.0)"/><ellipse cx="624.0" cy="383.5" rx="3.4" ry="1.7" fill="#0a0a0a" transform="rotate(-20 624.0 383.5)"/><ellipse cx="639.5" cy="378.5" rx="3.4" ry="1.7" fill="#0a0a0a" transform="rotate(-20 639.5 378.5)"/><path d="M551.4,441.6L556.7,471.2" stroke="#111" stroke-width="1.4"/><path d="M556.1,471.2L691.3,414.2" stroke="#222" stroke-width="0.9"/><path d="M583.3,430.7L586.8,455.7" stroke="#d0d0d0" stroke-width="0.8" stroke-dasharray="3 2"/><path d="M611.4,419.2L614.4,444.0" stroke="#cfcfcf" stroke-width="0.8" stroke-dasharray="3 2"/><path d="M639.0,407.9L641.4,432.7" stroke="#c8c8c8" stroke-width="0.8" stroke-dasharray="3 2"/><path d="M663.2,397.9L665.2,422.7" stroke="#d0d0d0" stroke-width="0.8" stroke-dasharray="3 2"/><path d="M689.4,384.0L691.3,414.2" stroke="#222" stroke-width="1.2"/>
<!-- dchairB -->
<path d="M650.1,465.5 C650.8,462.5 655.9,458.2 659.0,455.0 C662.1,451.8 666.2,447.3 668.6,446.1 C671.0,444.9 671.5,445.8 673.2,447.9 C674.9,450.0 678.0,455.3 678.8,459.0 C679.6,462.7 679.3,467.5 677.9,470.1 C676.5,472.7 673.1,473.5 670.5,474.7 C667.9,475.9 664.7,477.8 662.1,477.5 C659.5,477.2 656.8,474.9 654.8,472.9 C652.8,470.9 649.4,468.5 650.1,465.5Z" fill="#070707" />
<!-- W1end -->
<polygon points="781.2,429.8 787.9,435.9 787.3,485.8 780.8,479.7" fill="#4a4d55" stroke="#4a4d55" stroke-width="0.5" />
<polygon points="787.9,435.9 794.6,432.9 793.7,482.8 787.3,485.8" fill="#6e727a" stroke="#6e727a" stroke-width="0.5" />
<polygon points="781.2,429.8 787.8,426.8 794.6,432.9 787.9,435.9" fill="#73777f" stroke="#73777f" stroke-width="0.5" />
<!-- fridge -->
<polygon points="486.3,416.8 507,441.7 517.6,494.3 497.5,469.2" fill="#d9d9d9" stroke="#d9d9d9" stroke-width="0.5" />
<polygon points="507,441.7 551.7,423.7 560.4,476.1 517.6,494.3" fill="#f7f7f7" stroke="#f7f7f7" stroke-width="0.5" />
<polygon points="486.3,416.8 530.3,399.7 551.7,423.7 507,441.7" fill="#f1f1f1" stroke="#f1f1f1" stroke-width="0.5" />
<path d="M527.6,440.6L531.2,462.800 M534,438.8L538.400,462.6" stroke="#0a0a0a" stroke-width="1.3" fill="none"/><polygon points="511.6,453.5 525.4,449.5 526.0,460.0 513.6,464.6" fill="#fdfdfd" stroke="#d8d8d8" stroke-width="0.6"/><ellipse cx="520.6" cy="477.600" rx="2.2" ry="1.2" fill="#111"/><ellipse cx="552.5" cy="464.8" rx="2" ry="1.1" fill="#111"/><path d="M487.2,421.2L507.9,446.1" stroke="#efefef" stroke-width="0.7"/><path d="M488.2,425.5L508.8,450.5" stroke="#efefef" stroke-width="0.7"/><path d="M489.1,429.9L509.6,454.9" stroke="#efefef" stroke-width="0.7"/><path d="M490.0,434.3L510.5,459.2" stroke="#efefef" stroke-width="0.7"/><path d="M491.0,438.6L511.4,463.6" stroke="#efefef" stroke-width="0.7"/><path d="M491.9,443.0L512.3,468.0" stroke="#efefef" stroke-width="0.7"/><path d="M492.8,447.4L513.2,472.4" stroke="#efefef" stroke-width="0.7"/><path d="M493.8,451.7L514.1,476.8" stroke="#efefef" stroke-width="0.7"/><path d="M494.7,456.1L515.0,481.1" stroke="#efefef" stroke-width="0.7"/><path d="M495.6,460.5L515.8,485.5" stroke="#efefef" stroke-width="0.7"/><path d="M496.6,464.8L516.7,489.9" stroke="#efefef" stroke-width="0.7"/>
<!-- dtable -->
<path d="M608.0,486.7L606.0,471.3" stroke="#1a1a1a" stroke-width="1.1"/><path d="M628.1,509.2L626.3,493.8" stroke="#1a1a1a" stroke-width="1.1"/><path d="M657.6,496.0L656.2,480.6" stroke="#1a1a1a" stroke-width="1.1"/>
<polygon points="603,469 625.3,493.7 625.6,496.2 603.3,471.5" fill="#d9d9d9" stroke="#d9d9d9" stroke-width="0.5" />
<polygon points="625.3,493.7 658.8,478.9 659.1,481.4 625.6,496.2" fill="#f7f7f7" stroke="#f7f7f7" stroke-width="0.5" />
<polygon points="603,469 636.1,454.8 658.8,478.9 625.3,493.7" fill="#f1f1f1" stroke="#f1f1f1" stroke-width="0.5" />
<!-- dchairW -->
<path d="M588,484.500L585,509.500M592,501L606,512.500 M615,496L618.5,494.5" stroke="#3a3a2a" stroke-width="0.8" fill="none"/><polygon points="584.5,484.0 588.2,483.0 599.6,500.0 594.0,503.0" fill="#e2e2e2" /><path d="M591.0,489.5 C593.3,487.3 603.3,484.7 607.6,485.8 C611.9,486.9 618.3,492.9 616.9,496.0 C615.5,499.1 603.1,503.8 599.3,504.3 C595.5,504.8 595.4,501.5 594.0,499.0 C592.6,496.5 588.7,491.7 591.0,489.5Z" fill="#f0f0f0" />
<!-- Npier -->
<polygon points="377.6,462.1 384.2,471.6 399.3,521.8 392.9,512.2" fill="#4a4d55" stroke="#4a4d55" stroke-width="0.5" />
<polygon points="384.2,471.6 405,463.4 419.3,513.5 399.3,521.8" fill="#6e727a" stroke="#6e727a" stroke-width="0.5" />
<polygon points="377.6,462.1 398.3,454 405,463.4 384.2,471.6" fill="#73777f" stroke="#73777f" stroke-width="0.5" />
<!-- W1 -->
<polygon points="479.2,564.1 484.1,571 496.4,621.4 491.6,614.6" fill="#4a4d55" stroke="#4a4d55" stroke-width="0.5" />
<polygon points="484.1,571 788.8,434.4 788.1,484.3 496.4,621.4" fill="#6e727a" stroke="#6e727a" stroke-width="0.5" />
<polygon points="484.9,574.1 788.7,437.5 788.7,442.6 486.2,579.3" fill="#ffffff" fill-opacity="0.022"/>
<polygon points="487.9,586.6 788.6,449.8 788.5,452.8 488.7,589.6" fill="#000000" fill-opacity="0.022"/>
<polygon points="490.4,596.7 788.4,459.8 788.4,465.8 491.9,602.7" fill="#ffffff" fill-opacity="0.02"/>
<polygon points="493.8,610.7 788.3,473.7 788.2,477.5 494.7,614.6" fill="#000000" fill-opacity="0.02"/>
<polygon points="479.2,564.1 782.8,429.1 788.8,434.4 484.1,571" fill="#73777f" stroke="#73777f" stroke-width="0.5" />
<!-- LREpier -->
<polygon points="813.6,462.9 827.5,475.5 825.4,525.7 812,513" fill="#4a4d55" stroke="#4a4d55" stroke-width="0.5" />
<polygon points="827.5,475.5 859,460.6 855.6,510.7 825.4,525.7" fill="#6e727a" stroke="#6e727a" stroke-width="0.5" />
<polygon points="813.6,462.9 844.9,448.3 859,460.6 827.5,475.5" fill="#73777f" stroke="#73777f" stroke-width="0.5" />
<!-- LRE -->
<polygon points="827.5,475.5 894.9,536.4 889.8,586.8 825.4,525.7" fill="#4a4d55" stroke="#4a4d55" stroke-width="0.5" />
<polygon points="894.9,536.4 905.3,531 899.9,581.4 889.8,586.8" fill="#6e727a" stroke="#6e727a" stroke-width="0.5" />
<polygon points="827.5,475.5 837.7,470.6 905.3,531 894.9,536.4" fill="#73777f" stroke="#73777f" stroke-width="0.5" />
<!-- armNE -->
<path d="M760.2,572.4 C759.7,568.8 761.2,563.9 762.0,560.0 C762.8,556.1 762.8,552.3 764.8,549.3 C766.8,546.3 770.1,542.9 774.0,541.8 C777.9,540.7 783.6,542.2 788.0,542.5 C792.4,542.8 797.7,545.2 800.6,543.5 C803.5,541.8 803.3,534.1 805.2,532.0 C807.1,529.9 810.5,529.8 812.1,530.8 C813.7,531.8 814.8,533.8 814.7,538.0 C814.6,542.2 812.7,550.3 811.5,556.0 C810.3,561.7 809.3,567.5 807.5,572.4 C805.7,577.3 804.9,583.3 800.6,585.3 C796.4,587.3 788.0,584.8 782.0,584.2 C776.0,583.6 768.4,583.6 764.8,581.6 C761.2,579.6 760.7,576.0 760.2,572.4Z" fill="#3f3f3f" /><path d="M764.5,566.0 C764.2,563.0 766.1,554.4 768.0,551.0 C769.9,547.6 770.8,546.1 776.0,545.5 C781.2,544.9 795.5,544.9 799.0,547.5 C802.5,550.1 798.5,557.2 797.0,561.0 C795.5,564.8 794.5,568.7 790.0,570.0 C785.5,571.3 774.2,569.7 770.0,569.0 C765.8,568.3 764.8,569.0 764.5,566.0Z" fill="#4c4c4c" /><path d="M803.0,548.0 C804.2,542.8 805.1,537.0 806.5,534.5 C807.9,532.0 810.5,532.1 811.5,533.0 C812.5,533.9 813.3,533.8 812.5,540.0 C811.7,546.2 808.3,563.3 806.5,570.0 C804.7,576.7 802.7,580.7 801.5,580.0 C800.3,579.3 799.2,571.3 799.5,566.0 C799.8,560.7 801.8,553.2 803.0,548.0Z" fill="#4a4a4a" /><path d="M762.0,574.0 C766.1,572.8 783.8,573.5 790.0,574.0 C796.2,574.5 798.2,575.2 799.5,577.0 C800.8,578.8 803.7,583.8 798.0,584.5 C792.3,585.2 771.5,582.8 765.5,581.0 C759.5,579.2 757.9,575.2 762.0,574.0Z" fill="#353535" />
<!-- bench -->
<polygon points="542.7,586 552.9,599.4 555.2,611.9 545.2,598.5" fill="#d9d9d9" stroke="#d9d9d9" stroke-width="0.5" />
<polygon points="552.9,599.4 703.6,528.3 704.3,540.8 555.2,611.9" fill="#f7f7f7" stroke="#f7f7f7" stroke-width="0.5" />
<polygon points="542.7,586 692.5,516.5 703.6,528.3 552.9,599.4" fill="#f1f1f1" stroke="#f1f1f1" stroke-width="0.5" />
<!-- tv -->
<polygon points="640.1,533.1 685.1,511.2 687.4,534.3 642.4,553.9" fill="#0a0a0a" /><polygon points="641.8,535.2 683.8,514.2 685.6,533.0 643.6,551.4" fill="#5b5b5b" /><polygon points="653.9,548.3 674.7,540.5 678.2,544.2 657.4,552.3" fill="#060606" />
<!-- ushelf -->
<polygon points="537.1,557.6 546.4,569.7 546.8,571.8 537.6,559.8" fill="#d9d9d9" stroke="#d9d9d9" stroke-width="0.5" />
<polygon points="546.4,569.7 703.9,497.4 704,499.5 546.8,571.8" fill="#f7f7f7" stroke="#f7f7f7" stroke-width="0.5" />
<polygon points="537.1,557.6 693.6,486.8 703.9,497.4 546.4,569.7" fill="#f1f1f1" stroke="#f1f1f1" stroke-width="0.5" />
<!-- cl2 -->
<polygon points="697.5,576.3 702.2,581.4 702.5,587.9 697.9,582.7" fill="#d9d9d9" stroke="#d9d9d9" stroke-width="0.5" />
<polygon points="702.2,581.4 709.5,577.8 709.8,584.3 702.5,587.9" fill="#f7f7f7" stroke="#f7f7f7" stroke-width="0.5" />
<polygon points="697.5,576.3 704.8,572.7 709.5,577.8 702.2,581.4" fill="#f1f1f1" stroke="#f1f1f1" stroke-width="0.5" />
<!-- cl1 -->
<polygon points="655.2,597 659.7,602.4 660.4,608.8 655.8,603.5" fill="#d9d9d9" stroke="#d9d9d9" stroke-width="0.5" />
<polygon points="659.7,602.4 667.3,598.6 667.9,605.1 660.4,608.8" fill="#f7f7f7" stroke="#f7f7f7" stroke-width="0.5" />
<polygon points="655.2,597 662.8,593.3 667.3,598.6 659.7,602.4" fill="#f1f1f1" stroke="#f1f1f1" stroke-width="0.5" />
<!-- cl4 -->
<polygon points="724.4,606.2 729.3,611.7 729.6,618.1 724.7,612.7" fill="#d9d9d9" stroke="#d9d9d9" stroke-width="0.5" />
<polygon points="729.3,611.7 736.8,607.8 737,614.3 729.6,618.1" fill="#f7f7f7" stroke="#f7f7f7" stroke-width="0.5" />
<polygon points="724.4,606.2 731.8,602.4 736.8,607.8 729.3,611.7" fill="#f1f1f1" stroke="#f1f1f1" stroke-width="0.5" />
<!-- cl3 -->
<polygon points="681.5,628 686.3,633.7 686.8,640.1 682,634.5" fill="#d9d9d9" stroke="#d9d9d9" stroke-width="0.5" />
<polygon points="686.3,633.7 694,629.7 694.4,636.2 686.8,640.1" fill="#f7f7f7" stroke="#f7f7f7" stroke-width="0.5" />
<polygon points="681.5,628 689.2,624.1 694,629.7 686.3,633.7" fill="#f1f1f1" stroke="#f1f1f1" stroke-width="0.5" />
<!-- coffee -->
<polygon points="673.6,613.8 716.9,592.1 737.0,614.3 693.2,636.8" fill="#55553f" />
<polygon points="654.7,592 685.9,628.7 686.3,633.7 655.2,597" fill="#d9d9d9" stroke="#d9d9d9" stroke-width="0.5" />
<polygon points="685.9,628.7 736.6,602.8 736.8,607.8 686.3,633.7" fill="#f7f7f7" stroke="#f7f7f7" stroke-width="0.5" />
<polygon points="654.7,592 704.5,567.7 736.6,602.8 685.9,628.7" fill="#f1f1f1" stroke="#f1f1f1" stroke-width="0.5" />
<!-- sofa -->
<polygon points="667.5,647.4 683.9,667.3 686.2,696.4 670.2,676.6" fill="#2c2c2c" stroke="#2c2c2c" stroke-width="0.5" />
<polygon points="683.9,667.3 798.7,606.9 798,636.2 686.2,696.4" fill="#353535" stroke="#353535" stroke-width="0.5" />
<polygon points="667.5,647.4 781.3,588.9 798.7,606.9 683.9,667.3" fill="#414141" stroke="#414141" stroke-width="0.5" />
<path d="M655.1,642.5 C655.6,639.0 657.6,640.1 659.0,639.6 C660.4,639.1 661.4,638.3 663.2,639.4 C665.1,640.5 669.2,643.4 670.1,646.3 C671.0,649.1 670.8,654.1 668.5,656.5 C666.2,658.9 658.5,662.9 656.3,660.6 C654.1,658.3 654.6,646.0 655.1,642.5Z" fill="#3d3d3d" /><path d="M759.0,590.5 C759.2,588.9 761.5,588.3 763.0,588.0 C764.5,587.7 765.8,587.2 768.0,588.5 C770.2,589.8 775.7,593.5 776.4,595.5 C777.1,597.5 774.4,600.2 772.0,600.5 C769.6,600.8 764.2,599.2 762.0,597.5 C759.8,595.8 758.8,592.1 759.0,590.5Z" fill="#3d3d3d" />
<!-- armSW -->
<path d="M564.9,657.9 C565.6,654.2 569.4,652.4 572.0,650.0 C574.6,647.6 578.0,644.5 580.5,643.6 C583.0,642.8 582.8,643.8 587.0,644.9 C591.2,646.0 599.7,648.3 606.0,650.0 C612.3,651.7 620.7,653.5 624.7,655.3 C628.7,657.0 629.5,657.7 629.9,660.5 C630.3,663.3 628.3,668.5 627.0,672.0 C625.7,675.5 626.0,678.4 622.1,681.3 C618.2,684.1 609.6,688.1 603.9,689.1 C598.2,690.1 593.0,687.9 588.0,687.0 C583.0,686.1 577.3,686.4 574.0,683.9 C570.7,681.4 569.5,676.3 568.0,672.0 C566.5,667.7 564.2,661.6 564.9,657.9Z" fill="#3f3f3f" /><path d="M578.0,650.0 C578.2,648.3 576.7,645.8 584.0,647.0 C591.3,648.2 615.0,655.0 622.0,657.5 C629.0,660.0 626.3,660.2 626.0,662.0 C625.7,663.8 627.2,668.8 620.0,668.0 C612.8,667.2 590.0,660.0 583.0,657.0 C576.0,654.0 577.8,651.7 578.0,650.0Z" fill="#4d4d4d" /><path d="M567.0,660.0 C568.3,657.5 570.8,655.8 578.0,657.0 C585.2,658.2 603.7,663.8 610.0,667.0 C616.3,670.2 617.0,672.8 616.0,676.0 C615.0,679.2 610.5,685.2 604.0,686.0 C597.5,686.8 582.7,683.3 577.0,681.0 C571.3,678.7 571.7,675.5 570.0,672.0 C568.3,668.5 565.7,662.5 567.0,660.0Z" fill="#363636" />
<!-- X -->
<polygon points="426.3,528.5 501.6,636.8 513.7,687 440.5,578.9" fill="#4a4d55" stroke="#4a4d55" stroke-width="0.5" />
<polygon points="501.6,636.8 523.9,626.2 534.9,676.5 513.7,687" fill="#6e727a" stroke="#6e727a" stroke-width="0.5" />
<polygon points="426.3,528.5 447.3,519.7 523.9,626.2 501.6,636.8" fill="#73777f" stroke="#73777f" stroke-width="0.5" />
<!-- Xstub -->
<polygon points="427.7,560.2 434.5,570.2 448.9,620.6 442.3,610.6" fill="#4a4d55" stroke="#4a4d55" stroke-width="0.5" />
<polygon points="434.5,570.2 450.4,563.2 464,613.6 448.9,620.6" fill="#6e727a" stroke="#6e727a" stroke-width="0.5" />
<polygon points="427.7,560.2 443.6,553.3 450.4,563.2 434.5,570.2" fill="#73777f" stroke="#73777f" stroke-width="0.5" />
<!-- Wstub -->
<polygon points="338.2,598.7 340.7,603.1 363.8,664.8 361.3,660.4" fill="#4a4d55" stroke="#4a4d55" stroke-width="0.5" />
<polygon points="340.7,603.1 377.3,587.1 398.2,648.9 363.8,664.8" fill="#6e727a" stroke="#6e727a" stroke-width="0.5" />
<polygon points="338.2,598.7 374.7,582.8 377.3,587.1 340.7,603.1" fill="#73777f" stroke="#73777f" stroke-width="0.5" />
<!-- S1pier -->
<polygon points="542.7,703.5 550.2,714.4 560.7,763.9 553.5,753.2" fill="#4a4d55" stroke="#4a4d55" stroke-width="0.5" />
<polygon points="550.2,714.4 573.4,702.4 582.8,752.1 560.7,763.9" fill="#6e727a" stroke="#6e727a" stroke-width="0.5" />
<polygon points="542.7,703.5 565.8,691.7 573.4,702.4 550.2,714.4" fill="#73777f" stroke="#73777f" stroke-width="0.5" />
<!-- S1 -->
<polygon points="551.8,713.6 562.3,728.8 572.4,778.2 562.2,763.1" fill="#4a4d55" stroke="#4a4d55" stroke-width="0.5" />
<polygon points="562.3,728.8 917.9,542.2 911.9,592.7 572.4,778.2" fill="#6e727a" stroke="#6e727a" stroke-width="0.5" />
<polygon points="562.9,731.9 917.5,545.3 916.9,550.6 564,737" fill="#ffffff" fill-opacity="0.022"/>
<polygon points="565.4,744.1 916.1,557.8 915.7,560.9 566,747.1" fill="#000000" fill-opacity="0.022"/>
<polygon points="567.4,754.1 914.8,568 914.1,574 568.7,760" fill="#ffffff" fill-opacity="0.02"/>
<polygon points="570.2,767.7 913.2,581.9 912.7,585.9 571,771.5" fill="#000000" fill-opacity="0.02"/>
<polygon points="551.8,713.6 905.3,531 917.9,542.2 562.3,728.8" fill="#73777f" stroke="#73777f" stroke-width="0.5" />
<!-- Wcurb -->
<polygon points="296.5,551 459.9,838.8 460.1,839.5 296.8,551.7" fill="#565960" stroke="#565960" stroke-width="0.5" />
<polygon points="459.9,838.8 464.8,836.1 465,836.8 460.1,839.5" fill="#7d8189" stroke="#7d8189" stroke-width="0.5" />
<polygon points="296.5,551 300.7,549.3 464.8,836.1 459.9,838.8" fill="#7d8189" stroke="#7d8189" stroke-width="0.5" /><defs><radialGradient id="shN"><stop offset="0" stop-color="#000" stop-opacity="0.10"/><stop offset="0.55" stop-color="#000" stop-opacity="0.05"/><stop offset="1" stop-color="#000" stop-opacity="0"/></radialGradient></defs><ellipse cx="80" cy="262" rx="62" ry="52" fill="url(#shN)"/><polygon points="61.00,220.00 109.00,229.50 100.50,293.00 53.00,283.50 51.50,253.00" fill="#f3f3f3" fill-opacity="0.4" stroke="#c4c4c4" stroke-width="0.8" stroke-dasharray="2 1"/><path d="M52,253.5L105,259.500 M109,229.5L105,259.5L100.5,293" fill="none" stroke="#c4c4c4" stroke-width="0.8" stroke-dasharray="2 1"/><text x="82.5" y="240.500" font-size="4.6" fill="#b5b5b5" text-anchor="middle" transform="rotate(186 82.5 239)">TOP</text><text x="75.5" y="274.5" font-size="4.6" fill="#b5b5b5" text-anchor="middle" transform="matrix(-1 0 0 1 151 0) rotate(-6 75.5 273)">BACK</text><polygon points="15.60,209.50 21.20,203.50 26.90,209.50 25.20,209.50 25.20,216.00 22.60,216.00 22.60,211.60 19.90,211.60 19.90,216.00 17.30,216.00 17.30,209.50" fill="#a3a3a3" /><polygon points="140.50,205.00 145.40,206.90 140.50,208.80 135.60,206.90" fill="#b4b4b4" stroke="#eee" stroke-width="0.50" stroke-linejoin="round"/><polygon points="135.60,206.90 140.50,208.80 140.50,215.00 135.60,213.10" fill="#9c9c9c" stroke="#eee" stroke-width="0.50" stroke-linejoin="round"/><polygon points="140.50,208.80 145.40,206.90 145.40,213.10 140.50,215.00" fill="#a6a6a6" stroke="#eee" stroke-width="0.50" stroke-linejoin="round"/><path d="M140.5,205V201.800 M135.600,212.5L133.200,215.5 M145.4,212.5L147.800,215.5" stroke="#a3a3a3" stroke-width="1.1"/><polygon points="137.60,223.00 143.40,223.00 140.50,226.80" fill="#a3a3a3" /><circle cx="20.9" cy="309.8" r="6.2" fill="none" stroke="#a3a3a3" stroke-width="0.9"/><ellipse cx="20.9" cy="309.8" rx="3" ry="6.2" fill="none" stroke="#a3a3a3" stroke-width="0.7"/><path d="M14.7,309.8H27.1 M20.9,303.600V316" stroke="#a3a3a3" stroke-width="0.7"/><rect x="18.6" y="307.5" width="4.6" height="4.6" fill="none" stroke="#a3a3a3" stroke-width="0.7"/><polygon points="18.00,320.40 23.80,320.40 20.90,324.20" fill="#a3a3a3" /><path d="M1228,830.300L1204.4,827.6" stroke="#e8403a" stroke-width="1.8"/><path d="M1228,830.300V812.8" stroke="#3aa84a" stroke-width="1.6"/><path d="M1228.4,830.300L1231.8,812.8" stroke="#3a4ad8" stroke-width="1.6"/><text x="1202" y="823.300" font-size="9" fill="#e8403a">X</text><text x="1226" y="808.6" font-size="9" fill="#3aa84a">Z</text><text x="1231.200" y="809.6" font-size="9" fill="#3a4ad8">Y</text></svg></div><div id="panel"><svg width="1540" height="706" viewBox="0 160 1540 706"><rect x="1277" y="160" width="263" height="242" fill="#ececec"/><defs><linearGradient id="pg1" x1="0" y1="0" x2="0" y2="1"><stop offset="0" stop-color="#efefef"/><stop offset="1" stop-color="#e6e6e6"/></linearGradient></defs><rect x="1277" y="160" width="263" height="242" fill="url(#pg1)"/><rect x="1277" y="402" width="263" height="81" fill="#f3f3f3"/><rect x="1277" y="443.6" width="263" height="1" fill="#d9d9d9"/><rect x="1277" y="482.6" width="263" height="38" fill="#dddddd"/><rect x="1277" y="520.6" width="263" height="346" fill="#f0f0f0"/><rect x="1276.2" y="160" width="1" height="706" fill="#cfcfcf"/><clipPath id="cpc"><rect x="1250" y="160" width="26.2" height="40"/></clipPath><g clip-path="url(#cpc)"><circle cx="1269.6" cy="173.5" r="9.6" fill="#f4f4f4" stroke="#c8c8c8" stroke-width="1"/></g><path d="M1266.8,169.6L1271.400,173.800L1266.8,178" fill="none" stroke="#555" stroke-width="1.3"/><defs><radialGradient id="shadB" cx="0.5" cy="0.5" r="0.5"><stop offset="0" stop-color="#000" stop-opacity="0.42"/><stop offset="0.55" stop-color="#000" stop-opacity="0.16"/><stop offset="1" stop-color="#000" stop-opacity="0"/></radialGradient></defs><ellipse cx="1424" cy="292" rx="98" ry="64" fill="url(#shadB)"/><polygon points="1367.50,241.10 1439.60,200.50 1500.50,226.10 1499.50,268.10 1430.50,315.50 1370.20,284.30" fill="#e3e3e3" fill-opacity="0.93"/><polygon points="1367.50,241.10 1439.60,200.50 1500.50,226.10 1429.20,269.60" fill="#e9e9e9" fill-opacity="0.9"/><polygon points="1429.20,269.60 1500.50,226.10 1499.50,268.10 1430.50,315.50" fill="#dcdcdc" fill-opacity="0.9"/><polygon points="1367.50,241.10 1429.20,269.60 1430.50,315.50 1370.20,284.30" fill="#e2e2e2" fill-opacity="0.9"/><path d="M1370.2,284.3L1439.6,243.2L1499.5,268.1 M1439.6,243.2L1439.6,200.5" fill="none" stroke="#c4c4c4" stroke-width="0.9"/><path d="M1367.5,241.1L1439.6,200.5L1500.5,226.1L1429.2,269.6Z" fill="none" stroke="#8e8e8e" stroke-width="1" stroke-linejoin="round"/><path d="M1367.5,241.1L1370.2,284.3L1430.5,315.5L1499.5,268.1" fill="none" stroke="#8e8e8e" stroke-width="1" stroke-linejoin="round"/><path d="M1429.2,269.6L1430.5,315.5" stroke="#8e8e8e" stroke-width="1"/><path d="M1500.5,226.1L1499.5,268.1" stroke="#8e8e8e" stroke-width="1"/><path d="M1368.5,241.7L1425.2,267.8" stroke="#9a9a9a" stroke-width="2.6"/><circle cx="1429.2" cy="269.6" r="5.3" fill="#f0f0f0" stroke="#444" stroke-width="1.3"/><path d="M1392.4,185.6 C1416,183 1436,198 1436,218" fill="none" stroke="#9a9a9a" stroke-width="1.3"/><path d="M1430.6,210.5L1436,219.3L1440,209.6" fill="none" stroke="#9a9a9a" stroke-width="1.3"/><path d="M1347.3,301 C1372,314 1390,300 1391.2,268.5" fill="none" stroke="#9a9a9a" stroke-width="1.3"/><path d="M1386.5,277L1391.2,268.2L1396.6,278.5" fill="none" stroke="#9a9a9a" stroke-width="1.3"/><path d="M1473.5,319L1439.6,287.200" fill="none" stroke="#9a9a9a" stroke-width="1.3"/><path d="M1441.6,297L1439.4,287L1451.6,290" fill="none" stroke="#9a9a9a" stroke-width="1.3"/><text x="1300.85" y="190.80" font-size="14.40" letter-spacing="-0.413" fill="#9b9b9b" >Face</text><polygon points="1357.60,185.20 1366.40,185.20 1362.00,189.40" fill="#666" /><text x="1301.46" y="212.40" font-size="14.40" letter-spacing="0.410" fill="#9b9b9b" >0/1212605</text><path d="M1515.02,186.54 L1517.71,186.84 L1517.71,189.56 L1515.02,189.86 L1514.02,192.27 L1515.71,194.39 L1513.79,196.31 L1511.67,194.62 L1509.26,195.62 L1508.96,198.31 L1506.24,198.31 L1505.94,195.62 L1503.53,194.62 L1501.41,196.31 L1499.49,194.39 L1501.18,192.27 L1500.18,189.86 L1497.49,189.56 L1497.49,186.84 L1500.18,186.54 L1501.18,184.13 L1499.49,182.01 L1501.41,180.09 L1503.53,181.78 L1505.94,180.78 L1506.24,178.09 L1508.96,178.09 L1509.26,180.78 L1511.67,181.78 L1513.79,180.09 L1515.71,182.01 L1514.02,184.13Z M1503.72,188.20 a3.88,3.88 0 1 0 7.75,0 a3.88,3.88 0 1 0 -7.75,0Z" fill="#777" fill-rule="evenodd"/><text x="1300.85" y="308.60" font-size="14.40" letter-spacing="0.113" fill="#9b9b9b" >Edge</text><text x="1301.46" y="335.70" font-size="14.40" letter-spacing="0.410" fill="#9b9b9b" >0/1482208</text><text x="1469.96" y="329.40" font-size="14.40" letter-spacing="0.271" fill="#9b9b9b" >Vertex</text><text x="1449.16" y="354.20" font-size="14.40" letter-spacing="0.553" fill="#9b9b9b" >0/497848</text><text x="1290.24" y="385.40" font-size="14.60" letter-spacing="0.224" fill="#6b6b6b" >Selection Tools</text><rect x="1430.8" y="367.3" width="16.4" height="16" fill="none" stroke="#bdbdbd" stroke-width="1"/><polygon points="1443.40,376.60 1450.50,382.60 1447.30,383.00 1449.00,386.60 1447.60,387.20 1446.00,383.60 1443.60,385.60" fill="#555" /><polygon points="1473.30,366.80 1483.40,370.60 1473.30,374.40 1463.20,370.60" fill="#777" stroke="#eaeaea" stroke-width="0.70" stroke-linejoin="round"/><polygon points="1463.20,370.60 1473.30,374.40 1473.30,386.80 1463.20,383.00" fill="#666" stroke="#eaeaea" stroke-width="0.70" stroke-linejoin="round"/><polygon points="1473.30,374.40 1483.40,370.60 1483.40,383.00 1473.30,386.80" fill="#6e6e6e" stroke="#eaeaea" stroke-width="0.70" stroke-linejoin="round"/><rect x="1475.5" y="374" width="3.4" height="3.6" fill="#f2f2f2"/><rect x="1479.6" y="372" width="3" height="3.400" fill="#f2f2f2"/><rect x="1476" y="379" width="3" height="3" fill="#ddd"/><polygon points="1506.50,366.80 1516.40,370.60 1506.50,374.40 1496.60,370.60" fill="#bdbdbd" stroke="#d8d8d8" stroke-width="0.50" stroke-linejoin="round"/><polygon points="1496.60,370.60 1506.50,374.40 1506.50,386.80 1496.60,383.00" fill="#a4a4a4" stroke="#d8d8d8" stroke-width="0.50" stroke-linejoin="round"/><polygon points="1506.50,374.40 1516.40,370.60 1516.40,383.00 1506.50,386.80" fill="#b0b0b0" stroke="#d8d8d8" stroke-width="0.50" stroke-linejoin="round"/><path d="M1499.1,371.9V383.4 M1509.0,373.6V385.6" stroke="#cfcfcf" stroke-width="0.6"/><path d="M1501.6,372.8V384.3 M1511.5,372.7V384.7" stroke="#cfcfcf" stroke-width="0.6"/><path d="M1504.1,373.7V385.2 M1514.0,371.8V383.8" stroke="#cfcfcf" stroke-width="0.6"/><polygon points="1309.90,412.00 1321.60,416.26 1309.90,420.51 1298.20,416.26" fill="#7fbae6" stroke="#eaf3fa" stroke-width="1.00" stroke-linejoin="round"/><polygon points="1298.20,416.26 1309.90,420.51 1309.90,434.40 1298.20,430.14" fill="#6fb0e0" stroke="#eaf3fa" stroke-width="1.00" stroke-linejoin="round"/><polygon points="1309.90,420.51 1321.60,416.26 1321.60,430.14 1309.90,434.40" fill="#65a6d8" stroke="#eaf3fa" stroke-width="1.00" stroke-linejoin="round"/><path d="M1363.9,416.3L1363.9,430.1 M1363.9,416.3L1375.8,420.5 M1367.9,417.7L1367.9,431.6 M1363.9,420.9L1375.8,425.1 M1371.9,419.1L1371.9,433.0 M1363.9,425.5L1375.8,429.8 M1375.8,420.5L1375.8,434.4 M1363.9,430.1L1375.8,434.4 M1375.8,420.5L1375.8,434.4 M1375.8,420.5L1387.8,416.3 M1379.8,419.1L1379.8,433.0 M1375.8,425.1L1387.8,420.9 M1383.8,417.7L1383.8,431.6 M1375.8,429.8L1387.8,425.5 M1387.8,416.3L1387.8,430.1 M1375.8,434.4L1387.8,430.1 M1375.8,412.0L1363.9,416.3 M1375.8,412.0L1387.8,416.3 M1379.8,413.4L1367.9,417.7 M1371.9,413.4L1383.8,417.7 M1383.8,414.8L1371.9,419.1 M1367.9,414.8L1379.8,419.1 M1387.8,416.3L1375.8,420.5 M1363.9,416.3L1375.8,420.5 " fill="none" stroke="#a9a9a9" stroke-width="0.7"/><polygon points="1442.05,412.00 1453.80,416.26 1442.05,420.51 1430.30,416.26" fill="#7a7a7a" /><polygon points="1430.30,416.26 1442.05,420.51 1442.05,434.40 1430.30,430.14" fill="#666" /><polygon points="1442.05,420.51 1453.80,416.26 1453.80,430.14 1442.05,434.40" fill="#6e6e6e" /><path d="M1430.3,416.3L1430.3,430.1 M1430.3,416.3L1442.0,420.5 M1434.2,417.7L1434.2,431.6 M1430.3,420.9L1442.0,425.1 M1438.1,419.1L1438.1,433.0 M1430.3,425.5L1442.0,429.8 M1442.0,420.5L1442.0,434.4 M1430.3,430.1L1442.0,434.4 M1442.0,420.5L1442.0,434.4 M1442.0,420.5L1453.8,416.3 M1446.0,419.1L1446.0,433.0 M1442.0,425.1L1453.8,420.9 M1449.9,417.7L1449.9,431.6 M1442.0,429.8L1453.8,425.5 M1453.8,416.3L1453.8,430.1 M1442.0,434.4L1453.8,430.1 M1442.0,412.0L1430.3,416.3 M1442.0,412.0L1453.8,416.3 M1446.0,413.4L1434.2,417.7 M1438.1,413.4L1449.9,417.7 M1449.9,414.8L1438.1,419.1 M1434.2,414.8L1446.0,419.1 M1453.8,416.3L1442.0,420.5 M1430.3,416.3L1442.0,420.5 " fill="none" stroke="#e9e9e9" stroke-width="0.8"/><circle cx="1507.9" cy="423.4" r="8.6" fill="#6c6c6c"/><path d="M1507.9,414.800V432" stroke="#888" stroke-width="0.6"/><path d="M1507.9,412L1519.7,416.2V430.2L1507.9,434.4L1496.1,430.2V416.2Z M1496.1,416.2L1507.9,420.400L1519.7,416.2 M1507.9,420.4V434.4" fill="none" stroke="#999" stroke-width="0.7"/><text x="1284.43" y="468.20" font-size="13.40" letter-spacing="-0.114" fill="#6b6b6b" >Color</text><circle cx="1328.5" cy="463.5" r="7.9" fill="#050505"/><text x="1345.93" y="468.00" font-size="13.40" letter-spacing="0.367" fill="#6b6b6b" >Material</text><clipPath id="cpm"><circle cx="1409.6" cy="463.8" r="8"/></clipPath><g clip-path="url(#cpm)"><rect x="1400" y="455" width="20" height="20" fill="#f7f7f7"/><ellipse cx="1407.4" cy="460.2" rx="5.2" ry="2.9" transform="rotate(-28 1407.4 460.2)" fill="#f4f4f4" stroke="#5c5c5c" stroke-width="2.3"/><path d="M1400.5,466.2 Q1410.5,468.5 1418.5,457.5" fill="none" stroke="#5c5c5c" stroke-width="3"/><path d="M1403,471.2 Q1412.5,472.2 1418.5,463.5" fill="none" stroke="#5c5c5c" stroke-width="2.2"/></g><text x="1428.00" y="468.20" font-size="13.40" letter-spacing="-0.104" fill="#6b6b6b" >Opacity</text><rect x="1479.6" y="455.2" width="49.6" height="17.8" rx="2" fill="#f6f6f6" stroke="#cdcdcd" stroke-width="1"/><text x="1495.13" y="468.60" font-size="12.60" letter-spacing="0.000" fill="#6b6b6b" >0</text><polygon points="1521.00,460.50 1523.50,457.30 1526.00,460.50" fill="#333" /><polygon points="1521.00,467.40 1523.50,470.60 1526.00,467.40" fill="#333" /><text x="1284.40" y="505.50" font-size="13.40" letter-spacing="0.036" fill="#6b6b6b" >Objects 0 / 111</text><rect x="1376.8" y="489.2" width="115.4" height="26" rx="13" fill="#f5f5f5" stroke="#d0d0d0" stroke-width="0.8"/><circle cx="1478.6" cy="502.2" r="12" fill="#e9e9e9"/><text x="1386.01" y="506.60" font-size="15.40" letter-spacing="-0.365" fill="#9b9b9b" >Search</text><circle cx="1475.6" cy="500.2" r="5.3" fill="none" stroke="#555" stroke-width="1.5"/><path d="M1479.4,504.0L1484.9,509.5" stroke="#555" stroke-width="1.8" stroke-linecap="round"/><path d="M1518.02,500.94 L1520.71,501.24 L1520.71,503.96 L1518.02,504.26 L1517.02,506.67 L1518.71,508.79 L1516.79,510.71 L1514.67,509.02 L1512.26,510.02 L1511.96,512.71 L1509.24,512.71 L1508.94,510.02 L1506.53,509.02 L1504.41,510.71 L1502.49,508.79 L1504.18,506.67 L1503.18,504.26 L1500.49,503.96 L1500.49,501.24 L1503.18,500.94 L1504.18,498.53 L1502.49,496.41 L1504.41,494.49 L1506.53,496.18 L1508.94,495.18 L1509.24,492.49 L1511.96,492.49 L1512.26,495.18 L1514.67,496.18 L1516.79,494.49 L1518.71,496.41 L1517.02,498.53Z M1506.72,502.60 a3.88,3.88 0 1 0 7.75,0 a3.88,3.88 0 1 0 -7.75,0Z" fill="#5f5f5f" fill-rule="evenodd"/><clipPath id="cp1283537"><rect x="1283.2" y="537.8" width="115.6" height="128.2" rx="6"/></clipPath><g clip-path="url(#cp1283537)"><rect x="1283.2" y="537.8" width="115.6" height="128.2" fill="#e3e3e3"/><rect x="1283.2" y="633.6" width="115.6" height="32.4" fill="#ebebeb"/><defs><linearGradient id="cylg" x1="0" x2="1"><stop offset="0" stop-color="#e0e0e0"/><stop offset="0.55" stop-color="#cfcfcf"/><stop offset="1" stop-color="#a8a8a8"/></linearGradient></defs><path d="M1307.8,590 C1307,568 1320,556 1343,556 C1364,556 1373.500,568 1375.200,590 L1375.200,606 L1307.4,606Z" fill="url(#cylg)"/><ellipse cx="1341.3" cy="603.2" rx="34.200" ry="27.7" fill="#8c8c8c"/></g><circle cx="1296.7" cy="551.6" r="16" fill="#f0f0f0"/><circle cx="1296.7" cy="551.6" r="11.2" fill="#f6f6f6" stroke="#4a4a4a" stroke-width="1.3"/><text x="1304.52" y="655.00" font-size="14.80" letter-spacing="0.033" fill="#6b6b6b" >Body15 (1)</text><clipPath id="cp1413537"><rect x="1413.4" y="537.8" width="115.6" height="128.2" rx="6"/></clipPath><g clip-path="url(#cp1413537)"><rect x="1413.4" y="537.8" width="115.6" height="128.2" fill="#e3e3e3"/><rect x="1413.4" y="633.6" width="115.6" height="32.4" fill="#ebebeb"/><polygon points="1439.10,562.90 1503.20,562.90 1508.00,600.40 1506.20,625.70 1436.00,625.70 1434.10,600.40" fill="#0c0c0c" /></g><circle cx="1426.9" cy="551.6" r="16" fill="#f0f0f0"/><circle cx="1426.9" cy="551.6" r="11.2" fill="#f6f6f6" stroke="#4a4a4a" stroke-width="1.3"/><text x="1439.22" y="655.00" font-size="14.80" letter-spacing="0.002" fill="#6b6b6b" >Body3 (1)</text><clipPath id="cp1283682"><rect x="1283.2" y="682.0" width="115.6" height="128.2" rx="6"/></clipPath><g clip-path="url(#cp1283682)"><rect x="1283.2" y="682.0" width="115.6" height="128.2" fill="#e3e3e3"/><rect x="1283.2" y="777.8" width="115.6" height="32.4" fill="#ebebeb"/><polygon points="1302.80,726.10 1379.30,726.10 1376.40,751.00 1305.80,751.00" fill="#878787" /><rect x="1302.8" y="726.1" width="76.5" height="1.6" fill="#aaa"/></g><circle cx="1296.7" cy="695.8" r="16" fill="#f0f0f0"/><circle cx="1296.7" cy="695.8" r="11.2" fill="#f6f6f6" stroke="#4a4a4a" stroke-width="1.3"/><text x="1304.62" y="799.20" font-size="14.80" letter-spacing="0.033" fill="#6b6b6b" >Body13 (1)</text><clipPath id="cp1413682"><rect x="1413.4" y="682.0" width="115.6" height="128.2" rx="6"/></clipPath><g clip-path="url(#cp1413682)"><rect x="1413.4" y="682.0" width="115.6" height="128.2" fill="#e3e3e3"/><rect x="1413.4" y="777.8" width="115.6" height="32.4" fill="#ebebeb"/><rect x="1469.6" y="699.9" width="3.4" height="23.5" fill="#bcbcbc"/><rect x="1469.6" y="723.4" width="3.4" height="52.5" fill="#878787"/></g><circle cx="1426.9" cy="695.8" r="16" fill="#f0f0f0"/><circle cx="1426.9" cy="695.8" r="11.2" fill="#f6f6f6" stroke="#4a4a4a" stroke-width="1.3"/><text x="1435.12" y="799.20" font-size="14.80" letter-spacing="0.044" fill="#6b6b6b" >Body10 (1)</text><clipPath id="cp1283826"><rect x="1283.2" y="826.4" width="115.6" height="60.0" rx="6"/></clipPath><g clip-path="url(#cp1283826)"><rect x="1283.2" y="826.4" width="115.6" height="60.0" fill="#e3e3e3"/><rect x="1283.2" y="922.2" width="115.6" height="-35.8" fill="#ebebeb"/><rect x="1340.2" y="844.2" width="2.8" height="30" fill="#ababab"/></g><circle cx="1296.7" cy="840.2" r="16" fill="#f0f0f0"/><circle cx="1296.7" cy="840.2" r="11.2" fill="#f6f6f6" stroke="#4a4a4a" stroke-width="1.3"/><clipPath id="cp1413826"><rect x="1413.4" y="826.4" width="115.6" height="60.0" rx="6"/></clipPath><g clip-path="url(#cp1413826)"><rect x="1413.4" y="826.4" width="115.6" height="60.0" fill="#e3e3e3"/><rect x="1413.4" y="922.2" width="115.6" height="-35.8" fill="#ebebeb"/><rect x="1438.6" y="861.9" width="64.4" height="10" fill="#0c0c0c"/></g><circle cx="1426.9" cy="840.2" r="16" fill="#f0f0f0"/><circle cx="1426.9" cy="840.2" r="11.2" fill="#f6f6f6" stroke="#4a4a4a" stroke-width="1.3"/></svg></div><div id="topbar"><svg width="1540" height="52" viewBox="0 0 1540 52"><polygon points="24.00,15.50 38.40,12.00 51.20,14.70 37.20,19.80" fill="#f4f4f4" /><defs><linearGradient id="lgL" x1="0" x2="1"><stop offset="0" stop-color="#c9c9c9"/><stop offset="1" stop-color="#f2f2f2"/></linearGradient></defs><polygon points="24.00,15.50 37.20,19.80 36.80,40.30 25.10,33.10" fill="url(#lgL)" /><polygon points="37.20,19.80 51.20,14.70 49.30,31.10 36.80,40.30" fill="#e8e8e8" /><polygon points="26.60,16.50 36.00,13.00 36.00,15.60 31.80,17.20 31.80,35.40 28.00,32.80" fill="#1987ba" /><polygon points="37.60,20.20 51.20,15.00 50.40,20.60 43.40,23.30 43.00,28.40 49.90,25.60 49.30,31.10 37.00,40.00" fill="#20a6de" /><text x="53.46" y="34.30" font-size="18.60" letter-spacing="-0.818" fill="#666" >SelfCAD</text><text x="135.72" y="33.40" font-size="14.80" letter-spacing="0.228" fill="#6b6b6b" >File</text><polygon points="165.40,27.00 175.40,27.00 170.40,32.60" fill="#6b6b6b" /><text x="198.82" y="33.40" font-size="14.80" letter-spacing="0.388" fill="#6b6b6b" >Edit</text><polygon points="230.70,27.00 241.00,27.00 235.85,32.60" fill="#6b6b6b" /><text x="265.36" y="33.40" font-size="14.80" letter-spacing="0.127" fill="#6b6b6b" >View</text><polygon points="302.50,27.00 312.60,27.00 307.55,32.60" fill="#6b6b6b" /><text x="336.73" y="33.40" font-size="14.80" letter-spacing="0.403" fill="#6b6b6b" >Settings</text><polygon points="397.80,27.00 407.90,27.00 402.85,32.60" fill="#6b6b6b" /><text x="670.29" y="33.90" font-size="14.80" letter-spacing="0.734" fill="#6b6b6b" >Untitled-25</text><rect x="756.4" y="18" width="1.5" height="21" fill="#444"/><text x="762.50" y="33.90" font-size="14.80" letter-spacing="0.283" fill="#6b6b6b" >Auto-save in 30 seconds</text><path d="M1265.6,19.6H1277L1279.2,21.8V33.2Q1279.2,34.6 1277.8,34.6H1266.2Q1264.8,34.6 1264.8,33.2V20.4Q1264.8,19.6 1265.6,19.6Z" fill="#cfe3f3" stroke="#6fb1e1" stroke-width="1.9" stroke-linejoin="round"/><path d="M1267.2,19.8V24.6H1276V19.8" fill="#e4eef6" stroke="#6fb1e1" stroke-width="1.5"/><path d="M1274,20.5V23" stroke="#6fb1e1" stroke-width="1.3"/><path d="M1264.8,27.2H1279.2" stroke="#6fb1e1" stroke-width="1.6"/><path d="M1318.3,21.2L1308.1,27L1318.3,32.9" fill="none" stroke="#696969" stroke-width="1.3"/><circle cx="1318.3" cy="21.2" r="2.7" fill="#696969"/><circle cx="1308.1" cy="27.0" r="2.7" fill="#696969"/><circle cx="1318.3" cy="32.9" r="2.7" fill="#696969"/><polygon points="1342.60,19.80 1346.00,19.80 1346.00,35.80 1342.60,35.80" fill="#93d8c2" /><polygon points="1342.60,19.80 1346.40,19.80 1352.60,31.00 1352.60,35.80 1349.60,35.80" fill="#6fcaae" /><polygon points="1356.00,19.80 1359.70,19.80 1359.70,35.80 1356.00,35.80" fill="#2aa583" /><polygon points="1355.80,19.80 1359.70,19.80 1352.80,35.80 1349.60,35.80 1351.00,31.00" fill="#3cb592" /><path d="M1388.9,18.8 C1390,18.8 1390.2,19.6 1390.2,20.2 C1393,21 1394.2,23.4 1394.2,26 V29.8 L1396.3,32 V32.8 H1381.5 V32 L1383.6,29.8 V26 C1383.600,23.4 1384.800,21 1387.6,20.2 C1387.6,19.6 1387.8,18.8 1388.9,18.8Z" fill="#696969"/><path d="M1387.300,33.6 H1390.5 A1.600,1.600 0 0 1 1387.3,33.6Z" fill="#696969"/><circle cx="1430.4" cy="23.1" r="3.8" fill="#696969"/><path d="M1422.5,34.4 C1422.5,28 1438.2,28 1438.2,34.400Z" fill="#696969"/><circle cx="1471.3" cy="26.8" r="7.1" fill="#696969"/><polygon points="1474.50,31.50 1477.60,33.50 1473.00,33.20" fill="#696969" /><text x="1469.6" y="31.2" font-size="11.5" font-weight="bold" style="font-family:'Liberation Serif',serif;font-style:italic" fill="#e6e6e6">i</text><path d="M1510.0,24.3L1504.4,18.7 M1504.4,18.7H1509.0 M1504.4,18.7V23.3" fill="none" stroke="#696969" stroke-width="1.3"/><path d="M1515.3,24.3L1520.9,18.7 M1520.9,18.7H1516.3 M1520.9,18.7V23.3" fill="none" stroke="#696969" stroke-width="1.3"/><path d="M1510.0,29.6L1504.4,35.2 M1504.4,35.2H1509.0 M1504.4,35.2V30.6" fill="none" stroke="#696969" stroke-width="1.3"/><path d="M1515.3,29.6L1520.9,35.2 M1520.9,35.2H1516.3 M1520.9,35.2V30.6" fill="none" stroke="#696969" stroke-width="1.3"/></svg></div><div id="row2"><svg width="1540" height="33" viewBox="0 52 1540 33"><path d="M28.6,65.3 A6.5,6.5 0 1 1 32.6,76.1" fill="none" stroke="#696969" stroke-width="1.5"/><polygon points="26.60,60.60 31.80,64.40 27.40,67.00" fill="#696969" /><path d="M88.6,65.3 A6.5,6.5 0 1 0 84.3,76.1" fill="none" stroke="#696969" stroke-width="1.5"/><polygon points="90.40,60.60 85.20,64.40 89.60,67.00" fill="#696969" /><rect x="125.2" y="64.5" width="10" height="12" rx="1.2" fill="none" stroke="#696969" stroke-width="1.5"/><path d="M128.6,61 H137.2 Q138.4,61 138.4,62.2 V72.5" fill="none" stroke="#696969" stroke-width="1.5"/><path d="M175,63.1H186.7" stroke="#696969" stroke-width="1.4"/><path d="M178.6,62.6V60.9H183.2V62.6" fill="none" stroke="#696969" stroke-width="1.2"/><path d="M176.9,64.8V74.6Q176.9,75.8 178.1,75.8H183.7Q184.9,75.8 184.9,74.6V64.8" fill="none" stroke="#696969" stroke-width="1.4"/><path d="M179.6,65V75.5M182.2,65V75.5" stroke="#696969" stroke-width="1.2"/><polygon points="176.00,79.70 185.30,79.70 180.65,83.80" fill="#696969" /></svg></div><div id="toolbar"><svg width="1540" height="75" viewBox="0 85 1540 75"><text x="16.15" y="151.50" font-size="14.60" letter-spacing="-0.134" fill="#6dabd9" >3D Shapes</text><polygon points="90.00,144.60 99.60,144.60 94.80,150.20" fill="#6dabd9" /><text x="131.63" y="151.50" font-size="14.60" letter-spacing="0.622" fill="#6dabd9" >Drawing</text><polygon points="190.70,144.60 200.80,144.60 195.75,150.20" fill="#6dabd9" /><text x="232.83" y="151.50" font-size="14.60" letter-spacing="0.830" fill="#6b6b6b" >Move</text><text x="301.83" y="151.50" font-size="14.60" letter-spacing="0.438" fill="#6b6b6b" >Rotate</text><text x="377.94" y="151.50" font-size="14.60" letter-spacing="-0.256" fill="#6b6b6b" >Scale</text><text x="444.83" y="151.50" font-size="14.60" letter-spacing="0.933" fill="#6b6b6b" >Deform</text><polygon points="498.50,144.60 508.80,144.60 503.65,150.20" fill="#6b6b6b" /><text x="541.33" y="151.50" font-size="14.60" letter-spacing="0.634" fill="#6b6b6b" >Modify</text><polygon points="590.30,144.60 600.40,144.60 595.35,150.20" fill="#6b6b6b" /><text x="632.94" y="151.50" font-size="14.60" letter-spacing="0.069" fill="#6b6b6b" >Stitch &amp; Scoop</text><text x="761.71" y="151.50" font-size="14.60" letter-spacing="0.678" fill="#6b6b6b" >Tools</text><polygon points="800.00,144.60 809.70,144.60 804.85,150.20" fill="#6b6b6b" /><text x="842.50" y="151.50" font-size="14.60" letter-spacing="0.482" fill="#6dabd9" >Utilities</text><polygon points="895.40,144.60 905.30,144.60 900.35,150.20" fill="#6dabd9" /><text x="938.34" y="151.50" font-size="14.60" letter-spacing="0.266" fill="#6b6b6b" >Sculpting</text><text x="1030.69" y="151.50" font-size="14.60" letter-spacing="0.348" fill="#6dabd9" >Image To 3D</text><text x="1148.05" y="151.50" font-size="14.60" letter-spacing="0.354" fill="#6b6b6b" >3D Print</text><text x="1235.90" y="151.50" font-size="14.60" letter-spacing="0.627" fill="#6dabd9" >Animation</text><polygon points="58.05,95.20 75.40,101.62 58.05,108.04 40.70,101.62" fill="#86bde7" stroke="#e6f0f8" stroke-width="1.40" stroke-linejoin="round"/><polygon points="40.70,101.62 58.05,108.04 58.05,129.00 40.70,122.58" fill="#74b1df" stroke="#e6f0f8" stroke-width="1.40" stroke-linejoin="round"/><polygon points="58.05,108.04 75.40,101.62 75.40,122.58 58.05,129.00" fill="#69a5d4" stroke="#e6f0f8" stroke-width="1.40" stroke-linejoin="round"/><polygon points="154.40,96.60 155.20,95.80 157.30,95.80 158.10,96.60 158.10,113.50 156.20,117.40 154.40,113.50" fill="#6aa6d6" /><polygon points="160.00,95.50 178.70,105.50 178.70,128.90 160.00,117.20" fill="#78b3e0" /><line x1="165.6" y1="100.5" x2="165.6" y2="118.7" stroke="#b9d8f0" stroke-width="1"/><line x1="171.6" y1="103.7" x2="171.6" y2="122.5" stroke="#b9d8f0" stroke-width="1"/><line x1="162" y1="104.1" x2="177" y2="113.2" stroke="#b9d8f0" stroke-width="1"/><line x1="162" y1="110.6" x2="177" y2="120.2" stroke="#b9d8f0" stroke-width="1"/><polygon points="252.05,108.80 259.60,111.57 252.05,114.35 244.50,111.57" fill="#a2a2a2" stroke="#ebebeb" stroke-width="0.90" stroke-linejoin="round"/><polygon points="244.50,111.57 252.05,114.35 252.05,123.40 244.50,120.63" fill="#8d8d8d" stroke="#ebebeb" stroke-width="0.90" stroke-linejoin="round"/><polygon points="252.05,114.35 259.60,111.57 259.60,120.63 252.05,123.40" fill="#858585" stroke="#ebebeb" stroke-width="0.90" stroke-linejoin="round"/><polygon points="252.80,105.00 252.80,100.40 257.10,100.40 251.60,95.20 246.10,100.40 250.40,100.40 250.40,105.00" fill="#b0b0b0" /><polygon points="240.48,118.70 237.18,122.88 234.87,121.05 234.80,128.00 241.54,126.31 239.23,124.49 242.52,120.30" fill="#b0b0b0" /><polygon points="261.48,120.30 264.77,124.49 262.46,126.31 269.20,128.00 269.13,121.05 266.82,122.88 263.52,118.70" fill="#b0b0b0" /><path d="M309.6,112.2 A16.6,9.7 0 0 0 321.5,125.2" fill="none" stroke="#8a8a8a" stroke-width="2.4"/><path d="M339.6,112.2 A16.6,9.7 0 0 1 326.5,125.5" fill="none" stroke="#8a8a8a" stroke-width="2.4"/><polygon points="320.30,121.50 324.60,125.30 320.30,128.80" fill="#8a8a8a" /><polygon points="324.30,95.00 336.60,99.73 324.30,104.46 312.00,99.73" fill="#a2a2a2" stroke="#ebebeb" stroke-width="1.20" stroke-linejoin="round"/><polygon points="312.00,99.73 324.30,104.46 324.30,119.90 312.00,115.17" fill="#8d8d8d" stroke="#ebebeb" stroke-width="1.20" stroke-linejoin="round"/><polygon points="324.30,104.46 336.60,99.73 336.60,115.17 324.30,119.90" fill="#858585" stroke="#ebebeb" stroke-width="1.20" stroke-linejoin="round"/><rect x="379.0" y="95.1" width="2.9" height="2.9" fill="#a8a8a8"/><rect x="384.2" y="95.1" width="2.9" height="2.9" fill="#a8a8a8"/><rect x="389.4" y="95.1" width="2.9" height="2.9" fill="#a8a8a8"/><rect x="394.6" y="95.1" width="2.9" height="2.9" fill="#a8a8a8"/><rect x="399.8" y="95.1" width="2.9" height="2.9" fill="#a8a8a8"/><rect x="405.0" y="95.1" width="2.9" height="2.9" fill="#a8a8a8"/><rect x="410.2" y="95.1" width="2.9" height="2.9" fill="#a8a8a8"/><rect x="410.1" y="100.2" width="2.9" height="2.9" fill="#a8a8a8"/><rect x="410.1" y="105.4" width="2.9" height="2.9" fill="#a8a8a8"/><rect x="410.1" y="110.5" width="2.9" height="2.9" fill="#a8a8a8"/><rect x="410.1" y="115.7" width="2.9" height="2.9" fill="#a8a8a8"/><rect x="410.1" y="120.8" width="2.9" height="2.9" fill="#a8a8a8"/><rect x="410.1" y="126.0" width="2.9" height="2.9" fill="#a8a8a8"/><rect x="379" y="100.4" width="2.9" height="2.9" fill="#a8a8a8"/><rect x="379" y="105.7" width="2.9" height="2.9" fill="#a8a8a8"/><rect x="399.7" y="126" width="2.9" height="2.9" fill="#a8a8a8"/><rect x="404.9" y="126" width="2.9" height="2.9" fill="#a8a8a8"/><polygon points="398.10,110.94 403.32,105.94 405.54,108.25 406.40,101.20 399.31,101.75 401.53,104.06 396.30,109.06" fill="#a8a8a8" /><polygon points="387.40,112.00 395.90,115.15 387.40,118.31 378.90,115.15" fill="#a2a2a2" stroke="#ebebeb" stroke-width="0.90" stroke-linejoin="round"/><polygon points="378.90,115.15 387.40,118.31 387.40,128.60 378.90,125.45" fill="#8d8d8d" stroke="#ebebeb" stroke-width="0.90" stroke-linejoin="round"/><polygon points="387.40,118.31 395.90,115.15 395.90,125.45 387.40,128.60" fill="#858585" stroke="#ebebeb" stroke-width="0.90" stroke-linejoin="round"/><polygon points="467.50,100.30 480.50,95.10 494.20,100.30 480.20,106.40" fill="#a2a2a2" stroke="#ebebeb" stroke-width="1.2" stroke-linejoin="round"/><polygon points="465.60,101.30 479.80,107.00 475.80,128.70 461.00,123.10" fill="#8d8d8d" stroke="#ebebeb" stroke-width="1.2" stroke-linejoin="round"/><polygon points="480.80,107.00 494.60,101.00 490.30,122.60 476.80,128.70" fill="#858585" stroke="#ebebeb" stroke-width="1.2" stroke-linejoin="round"/><polygon points="571.65,95.20 589.00,101.62 571.65,108.04 554.30,101.62" fill="#a2a2a2" stroke="#ebebeb" stroke-width="1.20" stroke-linejoin="round"/><polygon points="554.30,101.62 571.65,108.04 571.65,129.00 554.30,122.58" fill="#8d8d8d" stroke="#ebebeb" stroke-width="1.20" stroke-linejoin="round"/><polygon points="571.65,108.04 589.00,101.62 589.00,122.58 571.65,129.00" fill="#858585" stroke="#ebebeb" stroke-width="1.20" stroke-linejoin="round"/><polygon points="571.65,97.80 583.00,102.00 571.65,106.00 560.50,102.00" fill="#8a8a8a" /><polygon points="571.65,100.50 578.00,102.60 571.65,105.00 565.00,102.60" fill="#b4b4b4" /><polygon points="557.50,107.00 568.00,112.50 568.00,121.00 557.50,118.50" fill="#b5b5b5" /><polygon points="557.50,107.00 566.00,115.00 557.50,118.50" fill="#9a9a9a" /><polygon points="577.50,114.00 589.60,109.00 589.60,123.00 580.00,127.00 580.00,124.50 577.50,125.50" fill="#ebebeb" /><polygon points="579.50,115.00 588.20,111.50 588.20,121.50 579.50,125.00" fill="#a5a5a5" /><polygon points="681.75,95.20 699.20,101.62 681.75,108.04 664.30,101.62" fill="#9a9a9a" stroke="#ebebeb" stroke-width="1.20" stroke-linejoin="round"/><polygon points="664.30,101.62 681.75,108.04 681.75,129.00 664.30,122.58" fill="#8a8a8a" stroke="#ebebeb" stroke-width="1.20" stroke-linejoin="round"/><polygon points="681.75,108.04 699.20,101.62 699.20,122.58 681.75,129.00" fill="#858585" stroke="#ebebeb" stroke-width="1.20" stroke-linejoin="round"/><polygon points="667.44,106.55 678.61,110.66 678.61,124.07 667.44,119.96" fill="#dcdcdc" /><polygon points="684.89,110.66 696.06,106.55 696.06,119.96 684.89,124.07" fill="#dcdcdc" /><polygon points="681.75,97.51 692.92,101.62 681.75,105.73 670.58,101.62" fill="#b0b0b0" /><polygon points="671.00,112.00 675.50,113.80 675.50,118.00 671.00,117.00" fill="#8a8a8a" /><polygon points="688.00,113.80 692.50,112.00 692.50,117.00 688.00,118.00" fill="#8a8a8a" /><polygon points="786.60,95.20 804.00,101.62 786.60,108.04 769.20,101.62" fill="#9a9a9a" stroke="#ebebeb" stroke-width="1.20" stroke-linejoin="round"/><polygon points="769.20,101.62 786.60,108.04 786.60,129.00 769.20,122.58" fill="#8a8a8a" stroke="#ebebeb" stroke-width="1.20" stroke-linejoin="round"/><polygon points="786.60,108.04 804.00,101.62 804.00,122.58 786.60,129.00" fill="#858585" stroke="#ebebeb" stroke-width="1.20" stroke-linejoin="round"/><polygon points="772.33,106.55 783.47,110.66 783.47,124.07 772.33,119.96" fill="#e6e6e6" /><polygon points="789.73,110.66 800.87,106.55 800.87,119.96 789.73,124.07" fill="#e6e6e6" /><polygon points="786.60,97.51 797.74,101.62 786.60,105.73 775.46,101.62" fill="#e2e2e2" /><polygon points="857.30,97.70 869.50,95.30 869.50,109.00 857.30,114.80" fill="none" stroke="#6eaee0" stroke-width="1.2"/><polygon points="863.90,119.40 874.40,115.20 884.90,119.40 874.40,123.60" fill="#6eaee0" /><polygon points="863.90,114.00 874.40,109.80 884.90,114.00 874.40,118.20" fill="#7fbbe8" stroke="#ebebeb" stroke-width="0.8"/><polygon points="863.90,108.50 874.40,104.30 884.90,108.50 874.40,112.70" fill="#8cc4ee" stroke="#ebebeb" stroke-width="0.8"/><line x1="888.6" y1="103.5" x2="888.6" y2="126.5" stroke="#6eaee0" stroke-width="1.3"/><polygon points="885.80,105.50 888.60,101.80 891.40,105.50" fill="#6eaee0" /><polygon points="885.80,124.60 888.60,128.30 891.40,124.60" fill="#6eaee0" /><path d="M876,102.3H884 M874.4,124.5V127.8H878 M880.5,127.8H886" fill="none" stroke="#6eaee0" stroke-width="1.1"/><polygon points="952.30,115.60 958.00,110.70 970.00,119.60 970.00,128.60 952.30,122.90" fill="#8a8a8a" /><polygon points="971.20,119.60 978.30,103.40 986.00,102.90 986.00,122.90 971.20,128.30" fill="#858585" /><line x1="977.4" y1="95.8" x2="966" y2="107.5" stroke="#999" stroke-width="1.5"/><polygon points="960.50,104.20 968.60,111.50 964.50,114.50 958.00,107.00" fill="#a0a0a0" /><rect x="1057.8" y="95.3" width="32.8" height="33.3" rx="2.5" fill="#6fb0e0"/><polygon points="1057.80,97.00 1060.00,95.30 1086.00,96.80 1086.00,126.50 1060.50,127.50 1057.80,126.00" fill="#7dbae6" /><rect x="1061.5" y="99.5" width="22" height="24" fill="#8cc4ec"/><polygon points="1061.50,123.50 1068.00,110.00 1072.00,114.00 1077.00,105.50 1083.50,118.00 1083.50,123.50" fill="#6aaadb" /><circle cx="1067" cy="104.5" r="3" fill="#6fb0e0"/><polygon points="1066.00,109.00 1083.50,100.00 1083.50,103.00 1068.00,111.00" fill="#d6e9f7" /><rect x="1164" y="95.6" width="23.8" height="1.8" fill="#777"/><polygon points="1169.80,97.40 1181.60,97.40 1177.70,102.30 1174.00,102.30" fill="#999" /><path d="M1175.8,102 C1176,105 1181,104.5 1181,106.5 C1181,108.5 1171,106.5 1171,108.8 C1171,110.5 1178,110 1181,110.5" fill="none" stroke="#8a8a8a" stroke-width="1.5"/><polygon points="1167.00,116.00 1174.00,109.50 1186.10,116.00 1186.10,123.00 1177.50,127.30 1167.00,123.50" fill="#d9d9d9" /><polygon points="1174.00,109.50 1182.90,109.40 1186.10,116.00 1177.20,120.00" fill="#8a8a8a" /><polygon points="1180.50,121.00 1183.50,119.70 1183.50,123.00 1180.50,124.30" fill="#9a9a9a" /><rect x="1170" y="120" width="1.2" height="4" fill="#aaa"/><ellipse cx="1270.2" cy="118.6" rx="17.2" ry="8.4" fill="none" stroke="#6fb0e0" stroke-width="1.6"/><path d="M1253,113.5 V121 A17.2,7.6 0 0 0 1287.4,121 V113.5 A17.2,7.6 0 0 1 1253,113.5Z" fill="#6fb0e0"/><rect x="1256.3" y="119.8" width="4.5" height="5.2" fill="#ddecf8"/><rect x="1262.6" y="119.8" width="6.0" height="5.2" fill="#ddecf8"/><rect x="1270.6" y="119.8" width="6.0" height="5.2" fill="#ddecf8"/><rect x="1278.6" y="119.8" width="5.0" height="5.2" fill="#ddecf8"/><polygon points="1268.50,120.60 1272.80,122.50 1268.50,124.40" fill="#5f9fd1" /><path d="M1258.8,99 C1258.5,96 1262,95.2 1265,96 C1268,95 1276,94.8 1281,96.5 C1285,98 1284.8,104 1284.6,108 V117.2 H1279.8 L1278.6,110.5 L1277.4,117.2 H1272.4 V111 H1271.2 V117.2 H1266.6 L1265.5,110.6 L1264.4,117.2 H1261.2 C1261.5,112 1260.3,108 1259.4,104Z" fill="#5f9fd1"/><rect x="1417.2" y="111.3" width="107" height="25" rx="12.5" fill="#eeeeee" stroke="#c9c9c9" stroke-width="1"/><circle cx="1511.8" cy="123.8" r="11.6" fill="#e3e3e3"/><text x="1428.54" y="127.40" font-size="12.00" letter-spacing="0.058" fill="#6b6b6b" >Find Tool</text><circle cx="1510.6" cy="122.6" r="3.9" fill="none" stroke="#666" stroke-width="1.3"/><path d="M1513.4,125.4L1517.4,129.4" stroke="#666" stroke-width="1.6" stroke-linecap="round"/><rect x="0" y="159" width="1540" height="1" fill="#d2d2d2"/></svg></div></div></body></html>
